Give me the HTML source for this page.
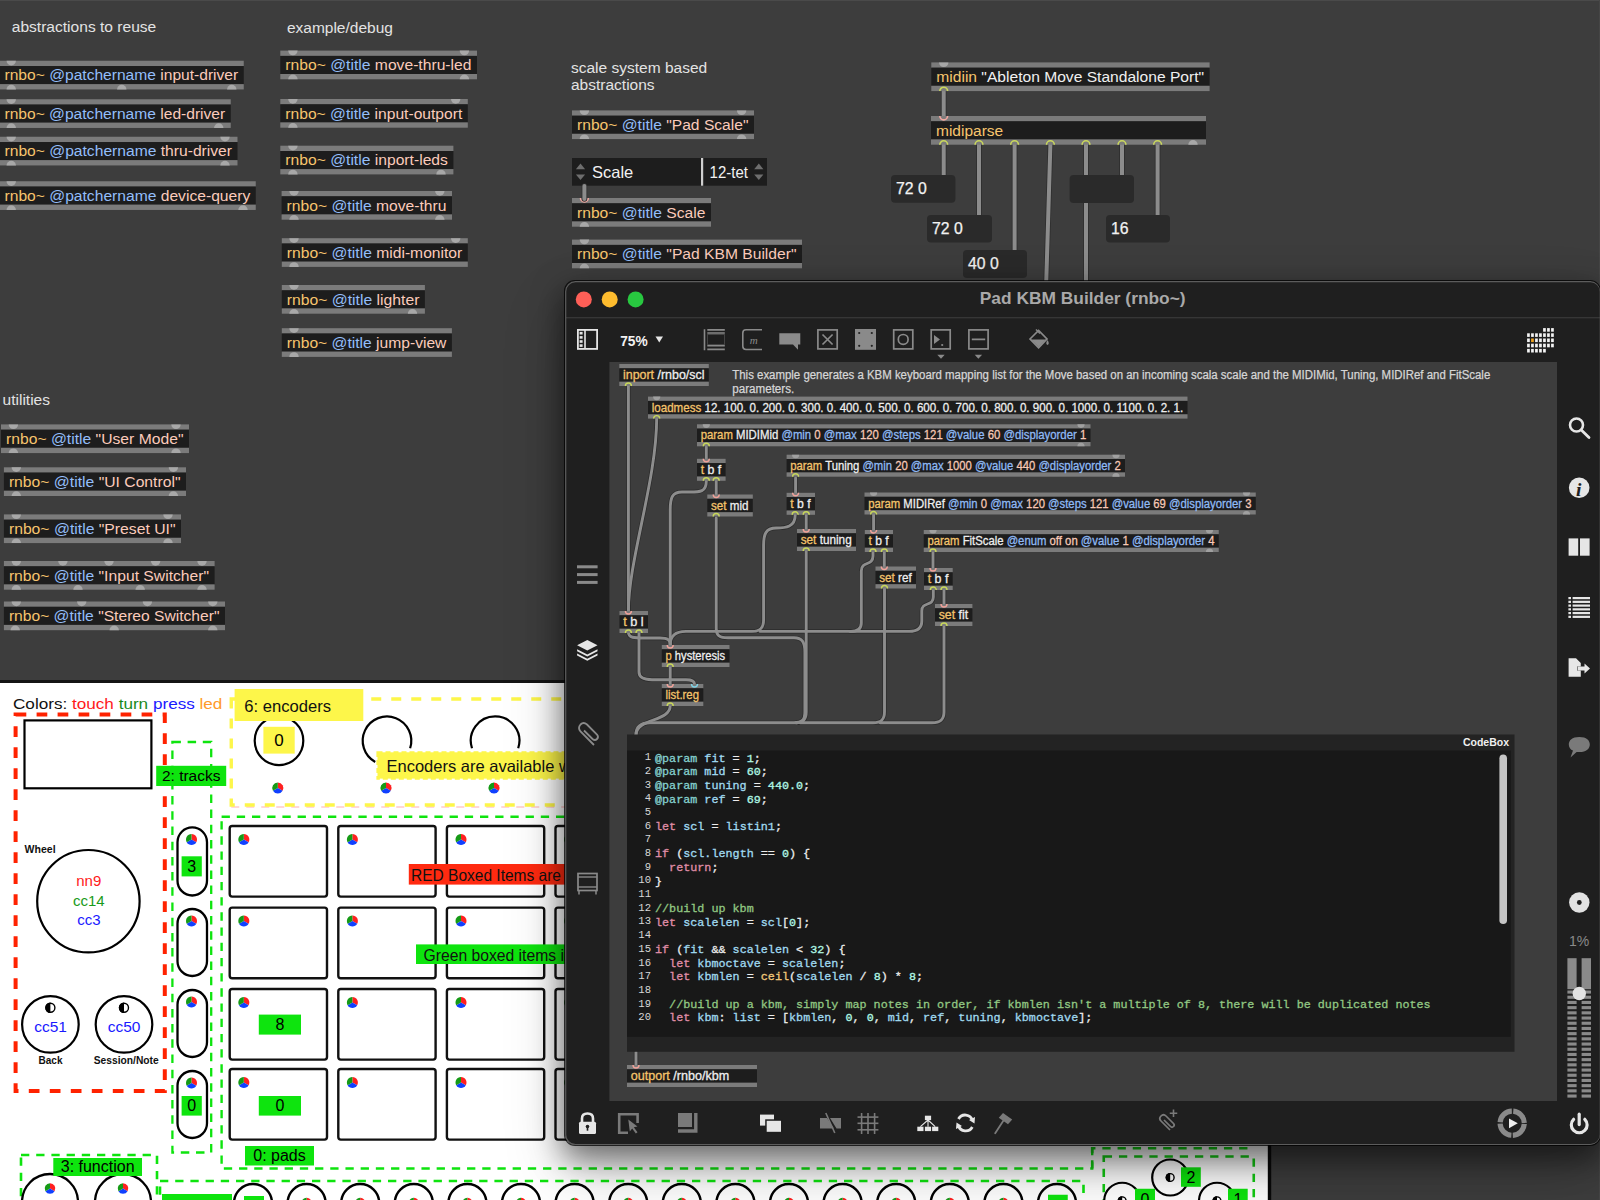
<!DOCTYPE html><html><head><meta charset="utf-8"><title>Max patch</title><style>
html,body{margin:0;padding:0;width:1600px;height:1200px;overflow:hidden;background:#3d3d3d;font-family:"Liberation Sans",sans-serif}
svg{display:block;overflow:hidden}
#win{position:absolute;left:565px;top:281px;width:1035px;height:864px;border-radius:10px;overflow:hidden;box-shadow:0 0 0 1px rgba(0,0,0,0.75),0 12px 30px 2px rgba(0,0,0,0.5),0 26px 64px rgba(0,0,0,0.2)}
</style></head><body>
<div style="position:relative;width:1600px;height:1200px;overflow:hidden">
<svg width="1600" height="1200" style="position:absolute;left:0;top:0">
<rect x="0" y="0" width="1600" height="1200" fill="#3d3d3d"/>
<text x="11.75" y="31.5" font-size="15.5" font-family='"Liberation Sans", sans-serif' textLength="144.5" lengthAdjust="spacingAndGlyphs"><tspan fill="#e3e3e3">abstractions to reuse</tspan></text>
<text x="286.9" y="33" font-size="15.5" font-family='"Liberation Sans", sans-serif'><tspan fill="#e3e3e3">example/debug</tspan></text>
<text x="571" y="72.5" font-size="15.5" font-family='"Liberation Sans", sans-serif'><tspan fill="#e3e3e3">scale system based</tspan></text>
<text x="571" y="90" font-size="15.5" font-family='"Liberation Sans", sans-serif'><tspan fill="#e3e3e3">abstractions</tspan></text>
<text x="2.6" y="405" font-size="15.5" font-family='"Liberation Sans", sans-serif'><tspan fill="#e3e3e3">utilities</tspan></text>
<rect x="-0.5" y="60.75" width="244.25" height="5.3" fill="#7b7b7b"/>
<rect x="-0.5" y="66.05" width="244.25" height="18.1" fill="#1d1d1d"/>
<rect x="-0.5" y="84.15" width="244.25" height="5.3" fill="#7b7b7b"/>
<path d="M6.55,60.75 A4.7,4.7 0 0 0 15.95,60.75 Z" fill="#a8a8a8"/>
<path d="M6.55,89.45 A4.7,4.7 0 0 1 15.95,89.45 Z" fill="#a8a8a8"/>
<path d="M117.05,89.45 A4.7,4.7 0 0 1 126.45,89.45 Z" fill="#a8a8a8"/>
<path d="M227.05,89.45 A4.7,4.7 0 0 1 236.45,89.45 Z" fill="#a8a8a8"/>
<text x="4.5" y="80.35" font-size="15.5" font-family='"Liberation Sans", sans-serif' textLength="233.75" lengthAdjust="spacingAndGlyphs"><tspan fill="#f7c56e">rnbo~ </tspan><tspan fill="#93befa">@patchername </tspan><tspan fill="#fbcbbb">input-driver</tspan></text>
<rect x="-0.5" y="99.25" width="231.25" height="5.3" fill="#7b7b7b"/>
<rect x="-0.5" y="104.55" width="231.25" height="18.1" fill="#1d1d1d"/>
<rect x="-0.5" y="122.65" width="231.25" height="5.3" fill="#7b7b7b"/>
<path d="M6.55,99.25 A4.7,4.7 0 0 0 15.95,99.25 Z" fill="#a8a8a8"/>
<path d="M6.55,127.95 A4.7,4.7 0 0 1 15.95,127.95 Z" fill="#a8a8a8"/>
<path d="M214.05,127.95 A4.7,4.7 0 0 1 223.45,127.95 Z" fill="#a8a8a8"/>
<text x="4.5" y="118.85" font-size="15.5" font-family='"Liberation Sans", sans-serif' textLength="220.75" lengthAdjust="spacingAndGlyphs"><tspan fill="#f7c56e">rnbo~ </tspan><tspan fill="#93befa">@patchername </tspan><tspan fill="#fbcbbb">led-driver</tspan></text>
<rect x="-0.5" y="136.75" width="238" height="5.3" fill="#7b7b7b"/>
<rect x="-0.5" y="142.05" width="238" height="18.1" fill="#1d1d1d"/>
<rect x="-0.5" y="160.15" width="238" height="5.3" fill="#7b7b7b"/>
<path d="M6.55,136.75 A4.7,4.7 0 0 0 15.95,136.75 Z" fill="#a8a8a8"/>
<path d="M220.3,136.75 A4.7,4.7 0 0 0 229.7,136.75 Z" fill="#a8a8a8"/>
<path d="M6.55,165.45 A4.7,4.7 0 0 1 15.95,165.45 Z" fill="#a8a8a8"/>
<path d="M220.3,165.45 A4.7,4.7 0 0 1 229.7,165.45 Z" fill="#a8a8a8"/>
<text x="4.5" y="156.35" font-size="15.5" font-family='"Liberation Sans", sans-serif' textLength="227.5" lengthAdjust="spacingAndGlyphs"><tspan fill="#f7c56e">rnbo~ </tspan><tspan fill="#93befa">@patchername </tspan><tspan fill="#fbcbbb">thru-driver</tspan></text>
<rect x="-0.5" y="181.25" width="256.25" height="5.3" fill="#7b7b7b"/>
<rect x="-0.5" y="186.55" width="256.25" height="18.1" fill="#1d1d1d"/>
<rect x="-0.5" y="204.65" width="256.25" height="5.3" fill="#7b7b7b"/>
<path d="M6.55,181.25 A4.7,4.7 0 0 0 15.95,181.25 Z" fill="#a8a8a8"/>
<path d="M6.55,209.95 A4.7,4.7 0 0 1 15.95,209.95 Z" fill="#a8a8a8"/>
<path d="M238.3,209.95 A4.7,4.7 0 0 1 247.7,209.95 Z" fill="#a8a8a8"/>
<text x="4.5" y="200.85" font-size="15.5" font-family='"Liberation Sans", sans-serif' textLength="245.75" lengthAdjust="spacingAndGlyphs"><tspan fill="#f7c56e">rnbo~ </tspan><tspan fill="#93befa">@patchername </tspan><tspan fill="#fbcbbb">device-query</tspan></text>
<rect x="1" y="424.4" width="188" height="5.3" fill="#7b7b7b"/>
<rect x="1" y="429.7" width="188" height="18.1" fill="#1d1d1d"/>
<rect x="1" y="447.8" width="188" height="5.3" fill="#7b7b7b"/>
<path d="M8.7,424.4 A4.7,4.7 0 0 0 18.1,424.4 Z" fill="#a8a8a8"/>
<path d="M171.3,424.4 A4.7,4.7 0 0 0 180.7,424.4 Z" fill="#a8a8a8"/>
<path d="M8.7,453.1 A4.7,4.7 0 0 1 18.1,453.1 Z" fill="#a8a8a8"/>
<path d="M171.3,453.1 A4.7,4.7 0 0 1 180.7,453.1 Z" fill="#a8a8a8"/>
<text x="6" y="444" font-size="15.5" font-family='"Liberation Sans", sans-serif' textLength="177.5" lengthAdjust="spacingAndGlyphs"><tspan fill="#f7c56e">rnbo~ </tspan><tspan fill="#93befa">@title </tspan><tspan fill="#fbcbbb">&quot;User Mode&quot;</tspan></text>
<rect x="3.9" y="467.3" width="182.1" height="5.3" fill="#7b7b7b"/>
<rect x="3.9" y="472.6" width="182.1" height="18.1" fill="#1d1d1d"/>
<rect x="3.9" y="490.7" width="182.1" height="5.3" fill="#7b7b7b"/>
<path d="M11.6,467.3 A4.7,4.7 0 0 0 21,467.3 Z" fill="#a8a8a8"/>
<path d="M168.7,467.3 A4.7,4.7 0 0 0 178.1,467.3 Z" fill="#a8a8a8"/>
<path d="M11.6,496 A4.7,4.7 0 0 1 21,496 Z" fill="#a8a8a8"/>
<path d="M168.7,496 A4.7,4.7 0 0 1 178.1,496 Z" fill="#a8a8a8"/>
<text x="8.9" y="486.9" font-size="15.5" font-family='"Liberation Sans", sans-serif' textLength="171.6" lengthAdjust="spacingAndGlyphs"><tspan fill="#f7c56e">rnbo~ </tspan><tspan fill="#93befa">@title </tspan><tspan fill="#fbcbbb">&quot;UI Control&quot;</tspan></text>
<rect x="3.9" y="514.4" width="177.1" height="5.3" fill="#7b7b7b"/>
<rect x="3.9" y="519.7" width="177.1" height="18.1" fill="#1d1d1d"/>
<rect x="3.9" y="537.8" width="177.1" height="5.3" fill="#7b7b7b"/>
<path d="M11.6,514.4 A4.7,4.7 0 0 0 21,514.4 Z" fill="#a8a8a8"/>
<path d="M163.3,514.4 A4.7,4.7 0 0 0 172.7,514.4 Z" fill="#a8a8a8"/>
<path d="M11.6,543.1 A4.7,4.7 0 0 1 21,543.1 Z" fill="#a8a8a8"/>
<path d="M163.3,543.1 A4.7,4.7 0 0 1 172.7,543.1 Z" fill="#a8a8a8"/>
<text x="8.9" y="534" font-size="15.5" font-family='"Liberation Sans", sans-serif' textLength="166.6" lengthAdjust="spacingAndGlyphs"><tspan fill="#f7c56e">rnbo~ </tspan><tspan fill="#93befa">@title </tspan><tspan fill="#fbcbbb">&quot;Preset UI&quot;</tspan></text>
<rect x="3.9" y="561" width="210.7" height="5.3" fill="#7b7b7b"/>
<rect x="3.9" y="566.3" width="210.7" height="18.1" fill="#1d1d1d"/>
<rect x="3.9" y="584.4" width="210.7" height="5.3" fill="#7b7b7b"/>
<path d="M11.6,561 A4.7,4.7 0 0 0 21,561 Z" fill="#a8a8a8"/>
<path d="M58.2,561 A4.7,4.7 0 0 0 67.6,561 Z" fill="#a8a8a8"/>
<path d="M104.3,561 A4.7,4.7 0 0 0 113.7,561 Z" fill="#a8a8a8"/>
<path d="M150.9,561 A4.7,4.7 0 0 0 160.3,561 Z" fill="#a8a8a8"/>
<path d="M197.3,561 A4.7,4.7 0 0 0 206.7,561 Z" fill="#a8a8a8"/>
<path d="M11.6,589.7 A4.7,4.7 0 0 1 21,589.7 Z" fill="#a8a8a8"/>
<path d="M73.3,589.7 A4.7,4.7 0 0 1 82.7,589.7 Z" fill="#a8a8a8"/>
<path d="M135.5,589.7 A4.7,4.7 0 0 1 144.9,589.7 Z" fill="#a8a8a8"/>
<path d="M197.3,589.7 A4.7,4.7 0 0 1 206.7,589.7 Z" fill="#a8a8a8"/>
<text x="8.9" y="580.6" font-size="15.5" font-family='"Liberation Sans", sans-serif' textLength="200.2" lengthAdjust="spacingAndGlyphs"><tspan fill="#f7c56e">rnbo~ </tspan><tspan fill="#93befa">@title </tspan><tspan fill="#fbcbbb">&quot;Input Switcher&quot;</tspan></text>
<rect x="3.9" y="601.5" width="221.1" height="5.3" fill="#7b7b7b"/>
<rect x="3.9" y="606.8" width="221.1" height="18.1" fill="#1d1d1d"/>
<rect x="3.9" y="624.9" width="221.1" height="5.3" fill="#7b7b7b"/>
<path d="M11.6,601.5 A4.7,4.7 0 0 0 21,601.5 Z" fill="#a8a8a8"/>
<path d="M77,601.5 A4.7,4.7 0 0 0 86.4,601.5 Z" fill="#a8a8a8"/>
<path d="M142.7,601.5 A4.7,4.7 0 0 0 152.1,601.5 Z" fill="#a8a8a8"/>
<path d="M208.1,601.5 A4.7,4.7 0 0 0 217.5,601.5 Z" fill="#a8a8a8"/>
<path d="M10.5,630.2 A4.7,4.7 0 0 1 19.9,630.2 Z" fill="#a8a8a8"/>
<path d="M109.5,630.2 A4.7,4.7 0 0 1 118.9,630.2 Z" fill="#a8a8a8"/>
<path d="M208.1,630.2 A4.7,4.7 0 0 1 217.5,630.2 Z" fill="#a8a8a8"/>
<text x="8.9" y="621.1" font-size="15.5" font-family='"Liberation Sans", sans-serif' textLength="210.6" lengthAdjust="spacingAndGlyphs"><tspan fill="#f7c56e">rnbo~ </tspan><tspan fill="#93befa">@title </tspan><tspan fill="#fbcbbb">&quot;Stereo Switcher&quot;</tspan></text>
<rect x="280.3" y="50.6" width="196.7" height="5.3" fill="#7b7b7b"/>
<rect x="280.3" y="55.9" width="196.7" height="18.1" fill="#1d1d1d"/>
<rect x="280.3" y="74" width="196.7" height="5.3" fill="#7b7b7b"/>
<path d="M288.2,50.6 A4.7,4.7 0 0 0 297.6,50.6 Z" fill="#a8a8a8"/>
<path d="M459.7,50.6 A4.7,4.7 0 0 0 469.1,50.6 Z" fill="#a8a8a8"/>
<path d="M288.2,79.3 A4.7,4.7 0 0 1 297.6,79.3 Z" fill="#a8a8a8"/>
<path d="M459.7,79.3 A4.7,4.7 0 0 1 469.1,79.3 Z" fill="#a8a8a8"/>
<text x="285.3" y="70.2" font-size="15.5" font-family='"Liberation Sans", sans-serif' textLength="186.2" lengthAdjust="spacingAndGlyphs"><tspan fill="#f7c56e">rnbo~ </tspan><tspan fill="#93befa">@title </tspan><tspan fill="#fbcbbb">move-thru-led</tspan></text>
<rect x="280.3" y="99" width="187.5" height="5.3" fill="#7b7b7b"/>
<rect x="280.3" y="104.3" width="187.5" height="18.1" fill="#1d1d1d"/>
<rect x="280.3" y="122.4" width="187.5" height="5.3" fill="#7b7b7b"/>
<path d="M288.2,99 A4.7,4.7 0 0 0 297.6,99 Z" fill="#a8a8a8"/>
<path d="M451,99 A4.7,4.7 0 0 0 460.4,99 Z" fill="#a8a8a8"/>
<path d="M288.2,127.7 A4.7,4.7 0 0 1 297.6,127.7 Z" fill="#a8a8a8"/>
<text x="285.3" y="118.6" font-size="15.5" font-family='"Liberation Sans", sans-serif' textLength="177" lengthAdjust="spacingAndGlyphs"><tspan fill="#f7c56e">rnbo~ </tspan><tspan fill="#93befa">@title </tspan><tspan fill="#fbcbbb">input-outport</tspan></text>
<rect x="280.3" y="145.7" width="173.1" height="5.3" fill="#7b7b7b"/>
<rect x="280.3" y="151" width="173.1" height="18.1" fill="#1d1d1d"/>
<rect x="280.3" y="169.1" width="173.1" height="5.3" fill="#7b7b7b"/>
<path d="M288.2,145.7 A4.7,4.7 0 0 0 297.6,145.7 Z" fill="#a8a8a8"/>
<path d="M288.2,174.4 A4.7,4.7 0 0 1 297.6,174.4 Z" fill="#a8a8a8"/>
<path d="M436.3,174.4 A4.7,4.7 0 0 1 445.7,174.4 Z" fill="#a8a8a8"/>
<text x="285.3" y="165.3" font-size="15.5" font-family='"Liberation Sans", sans-serif' textLength="162.6" lengthAdjust="spacingAndGlyphs"><tspan fill="#f7c56e">rnbo~ </tspan><tspan fill="#93befa">@title </tspan><tspan fill="#fbcbbb">inport-leds</tspan></text>
<rect x="281.6" y="191" width="170.4" height="5.3" fill="#7b7b7b"/>
<rect x="281.6" y="196.3" width="170.4" height="18.1" fill="#1d1d1d"/>
<rect x="281.6" y="214.4" width="170.4" height="5.3" fill="#7b7b7b"/>
<path d="M289.3,191 A4.7,4.7 0 0 0 298.7,191 Z" fill="#a8a8a8"/>
<path d="M435.1,191 A4.7,4.7 0 0 0 444.5,191 Z" fill="#a8a8a8"/>
<path d="M289.3,219.7 A4.7,4.7 0 0 1 298.7,219.7 Z" fill="#a8a8a8"/>
<path d="M435.1,219.7 A4.7,4.7 0 0 1 444.5,219.7 Z" fill="#a8a8a8"/>
<text x="286.6" y="210.6" font-size="15.5" font-family='"Liberation Sans", sans-serif' textLength="159.9" lengthAdjust="spacingAndGlyphs"><tspan fill="#f7c56e">rnbo~ </tspan><tspan fill="#93befa">@title </tspan><tspan fill="#fbcbbb">move-thru</tspan></text>
<rect x="281.8" y="238.2" width="186" height="5.3" fill="#7b7b7b"/>
<rect x="281.8" y="243.5" width="186" height="18.1" fill="#1d1d1d"/>
<rect x="281.8" y="261.6" width="186" height="5.3" fill="#7b7b7b"/>
<path d="M289.3,238.2 A4.7,4.7 0 0 0 298.7,238.2 Z" fill="#a8a8a8"/>
<path d="M451,238.2 A4.7,4.7 0 0 0 460.4,238.2 Z" fill="#a8a8a8"/>
<path d="M289.3,266.9 A4.7,4.7 0 0 1 298.7,266.9 Z" fill="#a8a8a8"/>
<text x="286.8" y="257.8" font-size="15.5" font-family='"Liberation Sans", sans-serif' textLength="175.5" lengthAdjust="spacingAndGlyphs"><tspan fill="#f7c56e">rnbo~ </tspan><tspan fill="#93befa">@title </tspan><tspan fill="#fbcbbb">midi-monitor</tspan></text>
<rect x="281.8" y="285" width="143.1" height="5.3" fill="#7b7b7b"/>
<rect x="281.8" y="290.3" width="143.1" height="18.1" fill="#1d1d1d"/>
<rect x="281.8" y="308.4" width="143.1" height="5.3" fill="#7b7b7b"/>
<path d="M289.3,285 A4.7,4.7 0 0 0 298.7,285 Z" fill="#a8a8a8"/>
<path d="M289.3,313.7 A4.7,4.7 0 0 1 298.7,313.7 Z" fill="#a8a8a8"/>
<path d="M407.8,313.7 A4.7,4.7 0 0 1 417.2,313.7 Z" fill="#a8a8a8"/>
<text x="286.8" y="304.6" font-size="15.5" font-family='"Liberation Sans", sans-serif' textLength="132.6" lengthAdjust="spacingAndGlyphs"><tspan fill="#f7c56e">rnbo~ </tspan><tspan fill="#93befa">@title </tspan><tspan fill="#fbcbbb">lighter</tspan></text>
<rect x="281.8" y="328.2" width="170.1" height="5.3" fill="#7b7b7b"/>
<rect x="281.8" y="333.5" width="170.1" height="18.1" fill="#1d1d1d"/>
<rect x="281.8" y="351.6" width="170.1" height="5.3" fill="#7b7b7b"/>
<path d="M289.3,328.2 A4.7,4.7 0 0 0 298.7,328.2 Z" fill="#a8a8a8"/>
<path d="M289.3,356.9 A4.7,4.7 0 0 1 298.7,356.9 Z" fill="#a8a8a8"/>
<text x="286.8" y="347.8" font-size="15.5" font-family='"Liberation Sans", sans-serif' textLength="159.6" lengthAdjust="spacingAndGlyphs"><tspan fill="#f7c56e">rnbo~ </tspan><tspan fill="#93befa">@title </tspan><tspan fill="#fbcbbb">jump-view</tspan></text>
<rect x="572" y="110.4" width="182" height="5.3" fill="#7b7b7b"/>
<rect x="572" y="115.7" width="182" height="18.1" fill="#1d1d1d"/>
<rect x="572" y="133.8" width="182" height="5.3" fill="#7b7b7b"/>
<path d="M579.7,110.4 A4.7,4.7 0 0 0 589.1,110.4 Z" fill="#a8a8a8"/>
<path d="M736.9,110.4 A4.7,4.7 0 0 0 746.3,110.4 Z" fill="#a8a8a8"/>
<path d="M579.7,139.1 A4.7,4.7 0 0 1 589.1,139.1 Z" fill="#a8a8a8"/>
<path d="M736.9,139.1 A4.7,4.7 0 0 1 746.3,139.1 Z" fill="#a8a8a8"/>
<text x="577" y="130" font-size="15.5" font-family='"Liberation Sans", sans-serif' textLength="171.5" lengthAdjust="spacingAndGlyphs"><tspan fill="#f7c56e">rnbo~ </tspan><tspan fill="#93befa">@title </tspan><tspan fill="#fbcbbb">&quot;Pad Scale&quot;</tspan></text>
<rect x="572" y="198" width="139" height="5.3" fill="#7b7b7b"/>
<rect x="572" y="203.3" width="139" height="18.1" fill="#1d1d1d"/>
<rect x="572" y="221.4" width="139" height="5.3" fill="#7b7b7b"/>
<path d="M580.5,198 A3.9,3.9 0 0 0 588.3,198" fill="none" stroke="#f2a7a0" stroke-width="1.6"/>
<path d="M579.7,226.7 A4.7,4.7 0 0 1 589.1,226.7 Z" fill="#a8a8a8"/>
<text x="577" y="217.6" font-size="15.5" font-family='"Liberation Sans", sans-serif' textLength="128.5" lengthAdjust="spacingAndGlyphs"><tspan fill="#f7c56e">rnbo~ </tspan><tspan fill="#93befa">@title </tspan><tspan fill="#fbcbbb">Scale</tspan></text>
<rect x="572" y="239.6" width="230" height="5.3" fill="#7b7b7b"/>
<rect x="572" y="244.9" width="230" height="18.1" fill="#1d1d1d"/>
<rect x="572" y="263" width="230" height="5.3" fill="#7b7b7b"/>
<path d="M579.7,239.6 A4.7,4.7 0 0 0 589.1,239.6 Z" fill="#a8a8a8"/>
<path d="M579.7,268.3 A4.7,4.7 0 0 1 589.1,268.3 Z" fill="#a8a8a8"/>
<text x="577" y="259.2" font-size="15.5" font-family='"Liberation Sans", sans-serif' textLength="219.5" lengthAdjust="spacingAndGlyphs"><tspan fill="#f7c56e">rnbo~ </tspan><tspan fill="#93befa">@title </tspan><tspan fill="#fbcbbb">&quot;Pad KBM Builder&quot;</tspan></text>
<rect x="572" y="158" width="195" height="27.7" fill="#1d1d1d"/>
<rect x="701" y="158" width="2.2" height="27.7" fill="#cfcfcf"/>
<path d="M575.9,169.2 l4.6,-5.6 l4.6,5.6 Z" fill="#6e6e6e"/>
<path d="M575.9,174.4 l4.6,5.6 l4.6,-5.6 Z" fill="#6e6e6e"/>
<path d="M754.2,169.2 l4.6,-5.6 l4.6,5.6 Z" fill="#6e6e6e"/>
<path d="M754.2,174.4 l4.6,5.6 l4.6,-5.6 Z" fill="#6e6e6e"/>
<text x="592" y="177.5" font-size="16.5" font-family='"Liberation Sans", sans-serif'><tspan fill="#f2f2f2">Scale</tspan></text>
<text x="709.6" y="177.5" font-size="16.5" font-family='"Liberation Sans", sans-serif' textLength="38.4" lengthAdjust="spacingAndGlyphs"><tspan fill="#f2f2f2">12-tet</tspan></text>
<path d="M584.4,186 L584.4,199" fill="none" stroke="#2e2e2e" stroke-width="5.6" stroke-linecap="round"/><path d="M584.4,186 L584.4,199" fill="none" stroke="#8c8c8c" stroke-width="4" stroke-linecap="round"/>
<path d="M943.7,91 L943.7,117" fill="none" stroke="#2e2e2e" stroke-width="5.6" stroke-linecap="round"/><path d="M943.7,91 L943.7,117" fill="none" stroke="#8c8c8c" stroke-width="4" stroke-linecap="round"/>
<path d="M943.7,144 L943.7,176" fill="none" stroke="#2e2e2e" stroke-width="5.6" stroke-linecap="round"/><path d="M943.7,144 L943.7,176" fill="none" stroke="#8c8c8c" stroke-width="4" stroke-linecap="round"/>
<path d="M979,144 L979,216" fill="none" stroke="#2e2e2e" stroke-width="5.6" stroke-linecap="round"/><path d="M979,144 L979,216" fill="none" stroke="#8c8c8c" stroke-width="4" stroke-linecap="round"/>
<path d="M1014.6,144 L1014.6,251" fill="none" stroke="#2e2e2e" stroke-width="5.6" stroke-linecap="round"/><path d="M1014.6,144 L1014.6,251" fill="none" stroke="#8c8c8c" stroke-width="4" stroke-linecap="round"/>
<path d="M1050.4,144 L1046,290" fill="none" stroke="#2e2e2e" stroke-width="5.6" stroke-linecap="round"/><path d="M1050.4,144 L1046,290" fill="none" stroke="#8c8c8c" stroke-width="4" stroke-linecap="round"/>
<path d="M1086,144 L1086,290" fill="none" stroke="#2e2e2e" stroke-width="5.6" stroke-linecap="round"/><path d="M1086,144 L1086,290" fill="none" stroke="#8c8c8c" stroke-width="4" stroke-linecap="round"/>
<path d="M1122,144 L1122,176" fill="none" stroke="#2e2e2e" stroke-width="5.6" stroke-linecap="round"/><path d="M1122,144 L1122,176" fill="none" stroke="#8c8c8c" stroke-width="4" stroke-linecap="round"/>
<path d="M1157.6,144 L1157.6,216" fill="none" stroke="#2e2e2e" stroke-width="5.6" stroke-linecap="round"/><path d="M1157.6,144 L1157.6,216" fill="none" stroke="#8c8c8c" stroke-width="4" stroke-linecap="round"/>
<rect x="931.3" y="62.4" width="278.3" height="5.3" fill="#7b7b7b"/>
<rect x="931.3" y="67.7" width="278.3" height="18.1" fill="#1d1d1d"/>
<rect x="931.3" y="85.8" width="278.3" height="5.3" fill="#7b7b7b"/>
<path d="M939,62.4 A4.7,4.7 0 0 0 948.4,62.4 Z" fill="#a8a8a8"/>
<path d="M939.8,91.1 A3.9,3.9 0 0 1 947.6,91.1" fill="none" stroke="#cbd95c" stroke-width="1.6"/>
<text x="936.3" y="82" font-size="15.5" font-family='"Liberation Sans", sans-serif' textLength="267.8" lengthAdjust="spacingAndGlyphs"><tspan fill="#f7c56e">midiin </tspan><tspan fill="#f0f0f0">&quot;Ableton Move Standalone Port&quot;</tspan></text>
<rect x="931" y="116" width="275" height="5.3" fill="#7b7b7b"/>
<rect x="931" y="121.3" width="275" height="18.1" fill="#1d1d1d"/>
<rect x="931" y="139.4" width="275" height="5.3" fill="#7b7b7b"/>
<path d="M939.8,116 A3.9,3.9 0 0 0 947.6,116" fill="none" stroke="#f2a7a0" stroke-width="1.6"/>
<path d="M939.8,144.7 A3.9,3.9 0 0 1 947.6,144.7" fill="none" stroke="#cbd95c" stroke-width="1.6"/>
<path d="M975.1,144.7 A3.9,3.9 0 0 1 982.9,144.7" fill="none" stroke="#cbd95c" stroke-width="1.6"/>
<path d="M1010.7,144.7 A3.9,3.9 0 0 1 1018.5,144.7" fill="none" stroke="#cbd95c" stroke-width="1.6"/>
<path d="M1046.5,144.7 A3.9,3.9 0 0 1 1054.3,144.7" fill="none" stroke="#cbd95c" stroke-width="1.6"/>
<path d="M1082.1,144.7 A3.9,3.9 0 0 1 1089.9,144.7" fill="none" stroke="#cbd95c" stroke-width="1.6"/>
<path d="M1118.1,144.7 A3.9,3.9 0 0 1 1125.9,144.7" fill="none" stroke="#cbd95c" stroke-width="1.6"/>
<path d="M1153.7,144.7 A3.9,3.9 0 0 1 1161.5,144.7" fill="none" stroke="#cbd95c" stroke-width="1.6"/>
<path d="M1188.3,144.7 A4.7,4.7 0 0 1 1197.7,144.7 Z" fill="#a8a8a8"/>
<text x="936" y="135.6" font-size="15.5" font-family='"Liberation Sans", sans-serif' data-x="264.5" lengthAdjust="spacingAndGlyphs"><tspan fill="#f7c56e">midiparse</tspan></text>
<rect x="891" y="175" width="64.4" height="27.7" fill="#2a2a2a" rx="4"/>
<text x="896" y="193.9" font-size="15.8" font-family='"Liberation Sans", sans-serif'><tspan fill="#f2f2f2" stroke="#f2f2f2" stroke-width="0.25">72 0</tspan></text>
<rect x="927" y="215" width="65" height="27.5" fill="#2a2a2a" rx="4"/>
<text x="932" y="233.9" font-size="15.8" font-family='"Liberation Sans", sans-serif'><tspan fill="#f2f2f2" stroke="#f2f2f2" stroke-width="0.25">72 0</tspan></text>
<rect x="963" y="250" width="64" height="28" fill="#2a2a2a" rx="4"/>
<text x="968" y="268.9" font-size="15.8" font-family='"Liberation Sans", sans-serif'><tspan fill="#f2f2f2" stroke="#f2f2f2" stroke-width="0.25">40 0</tspan></text>
<rect x="1069.6" y="175" width="64.4" height="28" fill="#2a2a2a" rx="4"/>
<rect x="1106" y="215" width="64" height="27.5" fill="#2a2a2a" rx="4"/>
<text x="1111" y="233.9" font-size="15.8" font-family='"Liberation Sans", sans-serif'><tspan fill="#f2f2f2" stroke="#f2f2f2" stroke-width="0.25">16</tspan></text>
<rect x="0" y="0" width="1600" height="1" fill="#4a4a4a"/>
<rect x="1599" y="0" width="1" height="1200" fill="#454545"/>
</svg>
<svg width="1272" height="520" viewBox="0 680 1272 520" style="position:absolute;left:0;top:680px">
<rect x="0" y="680" width="1268" height="3" fill="#141414"/>
<rect x="0" y="683" width="1268" height="517" fill="#ffffff"/>
<rect x="1267.8" y="680" width="3.4" height="520" fill="#0a0a0a"/>
<text x="13" y="709.3" font-size="15.5" font-family='"Liberation Sans", sans-serif' textLength="209.4" lengthAdjust="spacingAndGlyphs"><tspan fill="#111">Colors: </tspan><tspan fill="#ff1a1a">touch </tspan><tspan fill="#1a8a1a">turn </tspan><tspan fill="#1a1aff">press </tspan><tspan fill="#ff9a2a">led</tspan></text>
<rect x="15.6" y="714.5" width="149.2" height="376.5" fill="none" stroke="#ff2200" stroke-width="4" stroke-dasharray="10.7 10.3"/>
<rect x="24.5" y="720.4" width="126.9" height="67.9" fill="none" stroke="#000" stroke-width="2.2"/>
<text x="24.6" y="853.2" font-size="10" font-family='"Liberation Sans", sans-serif' textLength="31" lengthAdjust="spacingAndGlyphs" font-weight="bold"><tspan fill="#111">Wheel</tspan></text>
<circle cx="88.4" cy="901.2" r="51.2" fill="none" stroke="#000" stroke-width="2.2"/>
<text x="88.8" y="886.3" font-size="15" font-family='"Liberation Sans", sans-serif' text-anchor="middle" fill="#ff1a1a">nn9</text>
<text x="88.8" y="906" font-size="15" font-family='"Liberation Sans", sans-serif' text-anchor="middle" fill="#1a9a1a">cc14</text>
<text x="88.8" y="925.2" font-size="15" font-family='"Liberation Sans", sans-serif' text-anchor="middle" fill="#1a1aff">cc3</text>
<circle cx="50.4" cy="1024.4" r="28.3" fill="none" stroke="#000" stroke-width="2.2"/>
<circle cx="50.4" cy="1007.8" r="4.5" fill="#fff" stroke="#000" stroke-width="1.4"/><path d="M50.4,1002.6 A5.2,5.2 0 0 0 50.4,1013 Z" fill="#000"/>
<text x="50.5" y="1031.8" font-size="15.5" font-family='"Liberation Sans", sans-serif' text-anchor="middle" fill="#1a1aff">cc51</text>
<circle cx="124" cy="1024.4" r="28.3" fill="none" stroke="#000" stroke-width="2.2"/>
<circle cx="124" cy="1007.8" r="4.5" fill="#fff" stroke="#000" stroke-width="1.4"/><path d="M124,1002.6 A5.2,5.2 0 0 0 124,1013 Z" fill="#000"/>
<text x="124.1" y="1031.8" font-size="15.5" font-family='"Liberation Sans", sans-serif' text-anchor="middle" fill="#1a1aff">cc50</text>
<text x="50.5" y="1064" font-size="10" font-weight="bold" font-family='"Liberation Sans", sans-serif' text-anchor="middle" fill="#111">Back</text>
<text x="93.7" y="1064" font-size="10" font-family='"Liberation Sans", sans-serif' textLength="65" lengthAdjust="spacingAndGlyphs" font-weight="bold"><tspan fill="#111">Session/Note</tspan></text>
<rect x="172.4" y="742" width="38.8" height="410.5" fill="none" stroke="#0ee40e" stroke-width="2.3" stroke-dasharray="8.5 6.7"/>
<rect x="177.5" y="827.4" width="29.5" height="68.1" rx="14.75" fill="#fff" stroke="#000" stroke-width="2.3"/>
<path d="M191.5,839.5 L191.5,834 A5.5,5.5 0 0 1 196.26,842.25 Z" fill="#ff2020"/><path d="M191.5,839.5 L196.26,842.25 A5.5,5.5 0 0 1 186.74,842.25 Z" fill="#1040ff"/><path d="M191.5,839.5 L186.74,842.25 A5.5,5.5 0 0 1 191.5,834 Z" fill="#169a16"/>
<rect x="177.5" y="909" width="29.5" height="67" rx="14.75" fill="#fff" stroke="#000" stroke-width="2.3"/>
<path d="M191.5,921.1 L191.5,915.6 A5.5,5.5 0 0 1 196.26,923.85 Z" fill="#ff2020"/><path d="M191.5,921.1 L196.26,923.85 A5.5,5.5 0 0 1 186.74,923.85 Z" fill="#1040ff"/><path d="M191.5,921.1 L186.74,923.85 A5.5,5.5 0 0 1 191.5,915.6 Z" fill="#169a16"/>
<rect x="177.5" y="990" width="29.5" height="67" rx="14.75" fill="#fff" stroke="#000" stroke-width="2.3"/>
<path d="M191.5,1002.1 L191.5,996.6 A5.5,5.5 0 0 1 196.26,1004.85 Z" fill="#ff2020"/><path d="M191.5,1002.1 L196.26,1004.85 A5.5,5.5 0 0 1 186.74,1004.85 Z" fill="#1040ff"/><path d="M191.5,1002.1 L186.74,1004.85 A5.5,5.5 0 0 1 191.5,996.6 Z" fill="#169a16"/>
<rect x="177.5" y="1071" width="29.5" height="67" rx="14.75" fill="#fff" stroke="#000" stroke-width="2.3"/>
<path d="M191.5,1083.1 L191.5,1077.6 A5.5,5.5 0 0 1 196.26,1085.85 Z" fill="#ff2020"/><path d="M191.5,1083.1 L196.26,1085.85 A5.5,5.5 0 0 1 186.74,1085.85 Z" fill="#1040ff"/><path d="M191.5,1083.1 L186.74,1085.85 A5.5,5.5 0 0 1 191.5,1077.6 Z" fill="#169a16"/>
<rect x="181.6" y="856.3" width="20.2" height="20.1" fill="#0ee40e"/><text x="191.7" y="871.81" font-size="16" font-family='"Liberation Sans", sans-serif' text-anchor="middle" fill="#000">3</text>
<rect x="181.6" y="1096" width="20.2" height="19.6" fill="#0ee40e"/><text x="191.7" y="1111.26" font-size="16" font-family='"Liberation Sans", sans-serif' text-anchor="middle" fill="#000">0</text>
<rect x="156.2" y="765.8" width="70" height="20.2" fill="#0ee40e"/><text x="191.2" y="781.18" font-size="15.5" font-family='"Liberation Sans", sans-serif' text-anchor="middle" fill="#000">2: tracks</text>
<path d="M231.25,807 H1268" fill="none" stroke="#ffb0b0" stroke-width="1.2" stroke-dasharray="8 7"/>
<rect x="231.25" y="699" width="1068.75" height="106" fill="none" stroke="#fdf64a" stroke-width="3.4" stroke-dasharray="10 10"/>
<circle cx="279" cy="740.75" r="24.3" fill="none" stroke="#000" stroke-width="2.2"/>
<rect x="234.6" y="689" width="128.7" height="32" fill="#fdf64a"/><text x="298.95" y="710.28" font-size="15.5" font-family='"Liberation Sans", sans-serif' text-anchor="middle" fill="#000"></text>
<text x="244.3" y="711.5" font-size="16.5" font-family='"Liberation Sans", sans-serif' textLength="86.7" lengthAdjust="spacingAndGlyphs"><tspan fill="#111">6: encoders</tspan></text>
<path d="M375.22,762 A24.3,24.3 0 1 1 410.11,748.26" fill="none" stroke="#000" stroke-width="2.2"/>
<path d="M471.99,748.26 A24.3,24.3 0 1 1 518.21,748.26" fill="none" stroke="#000" stroke-width="2.2"/>
<rect x="263.4" y="726.8" width="31.3" height="26.8" fill="#fdf64a"/><text x="279.05" y="746.02" font-size="17" font-family='"Liberation Sans", sans-serif' text-anchor="middle" fill="#000">0</text>
<path d="M277.8,788 L277.8,782.4 A5.6,5.6 0 0 1 282.65,790.8 Z" fill="#ff2020"/><path d="M277.8,788 L282.65,790.8 A5.6,5.6 0 0 1 272.95,790.8 Z" fill="#1040ff"/><path d="M277.8,788 L272.95,790.8 A5.6,5.6 0 0 1 277.8,782.4 Z" fill="#169a16"/>
<path d="M386,788 L386,782.4 A5.6,5.6 0 0 1 390.85,790.8 Z" fill="#ff2020"/><path d="M386,788 L390.85,790.8 A5.6,5.6 0 0 1 381.15,790.8 Z" fill="#1040ff"/><path d="M386,788 L381.15,790.8 A5.6,5.6 0 0 1 386,782.4 Z" fill="#169a16"/>
<path d="M494,788 L494,782.4 A5.6,5.6 0 0 1 498.85,790.8 Z" fill="#ff2020"/><path d="M494,788 L498.85,790.8 A5.6,5.6 0 0 1 489.15,790.8 Z" fill="#1040ff"/><path d="M494,788 L489.15,790.8 A5.6,5.6 0 0 1 494,782.4 Z" fill="#169a16"/>
<rect x="377.5" y="752.3" width="900" height="26.3" fill="#fdf64a"/>
<rect x="377.5" y="752.3" width="900" height="26.3" fill="none" stroke="#fdf64a" stroke-width="2.2" stroke-dasharray="5 3"/>
<text x="386.5" y="771.5" font-size="16.5" font-family='"Liberation Sans", sans-serif'><tspan fill="#111">Encoders are available when </tspan></text>
<rect x="221.6" y="816.75" width="870.6" height="351.75" fill="none" stroke="#0ee40e" stroke-width="2.4" stroke-dasharray="8.3 6.9"/>
<rect x="229.7" y="826" width="97.3" height="70.6" rx="2.5" fill="#fff" stroke="#111" stroke-width="2.4"/>
<path d="M243.8,839.5 L243.8,834 A5.5,5.5 0 0 1 248.56,842.25 Z" fill="#ff2020"/><path d="M243.8,839.5 L248.56,842.25 A5.5,5.5 0 0 1 239.04,842.25 Z" fill="#1040ff"/><path d="M243.8,839.5 L239.04,842.25 A5.5,5.5 0 0 1 243.8,834 Z" fill="#169a16"/>
<rect x="338.3" y="826" width="97.3" height="70.6" rx="2.5" fill="#fff" stroke="#111" stroke-width="2.4"/>
<path d="M352.4,839.5 L352.4,834 A5.5,5.5 0 0 1 357.16,842.25 Z" fill="#ff2020"/><path d="M352.4,839.5 L357.16,842.25 A5.5,5.5 0 0 1 347.64,842.25 Z" fill="#1040ff"/><path d="M352.4,839.5 L347.64,842.25 A5.5,5.5 0 0 1 352.4,834 Z" fill="#169a16"/>
<rect x="446.9" y="826" width="97.3" height="70.6" rx="2.5" fill="#fff" stroke="#111" stroke-width="2.4"/>
<path d="M461,839.5 L461,834 A5.5,5.5 0 0 1 465.76,842.25 Z" fill="#ff2020"/><path d="M461,839.5 L465.76,842.25 A5.5,5.5 0 0 1 456.24,842.25 Z" fill="#1040ff"/><path d="M461,839.5 L456.24,842.25 A5.5,5.5 0 0 1 461,834 Z" fill="#169a16"/>
<rect x="555.5" y="826" width="97.3" height="70.6" rx="2.5" fill="#fff" stroke="#111" stroke-width="2.4"/>
<path d="M569.6,839.5 L569.6,834 A5.5,5.5 0 0 1 574.36,842.25 Z" fill="#ff2020"/><path d="M569.6,839.5 L574.36,842.25 A5.5,5.5 0 0 1 564.84,842.25 Z" fill="#1040ff"/><path d="M569.6,839.5 L564.84,842.25 A5.5,5.5 0 0 1 569.6,834 Z" fill="#169a16"/>
<rect x="664.1" y="826" width="97.3" height="70.6" rx="2.5" fill="#fff" stroke="#111" stroke-width="2.4"/>
<path d="M678.2,839.5 L678.2,834 A5.5,5.5 0 0 1 682.96,842.25 Z" fill="#ff2020"/><path d="M678.2,839.5 L682.96,842.25 A5.5,5.5 0 0 1 673.44,842.25 Z" fill="#1040ff"/><path d="M678.2,839.5 L673.44,842.25 A5.5,5.5 0 0 1 678.2,834 Z" fill="#169a16"/>
<rect x="772.7" y="826" width="97.3" height="70.6" rx="2.5" fill="#fff" stroke="#111" stroke-width="2.4"/>
<path d="M786.8,839.5 L786.8,834 A5.5,5.5 0 0 1 791.56,842.25 Z" fill="#ff2020"/><path d="M786.8,839.5 L791.56,842.25 A5.5,5.5 0 0 1 782.04,842.25 Z" fill="#1040ff"/><path d="M786.8,839.5 L782.04,842.25 A5.5,5.5 0 0 1 786.8,834 Z" fill="#169a16"/>
<rect x="881.3" y="826" width="97.3" height="70.6" rx="2.5" fill="#fff" stroke="#111" stroke-width="2.4"/>
<path d="M895.4,839.5 L895.4,834 A5.5,5.5 0 0 1 900.16,842.25 Z" fill="#ff2020"/><path d="M895.4,839.5 L900.16,842.25 A5.5,5.5 0 0 1 890.64,842.25 Z" fill="#1040ff"/><path d="M895.4,839.5 L890.64,842.25 A5.5,5.5 0 0 1 895.4,834 Z" fill="#169a16"/>
<rect x="989.9" y="826" width="97.3" height="70.6" rx="2.5" fill="#fff" stroke="#111" stroke-width="2.4"/>
<path d="M1004,839.5 L1004,834 A5.5,5.5 0 0 1 1008.76,842.25 Z" fill="#ff2020"/><path d="M1004,839.5 L1008.76,842.25 A5.5,5.5 0 0 1 999.24,842.25 Z" fill="#1040ff"/><path d="M1004,839.5 L999.24,842.25 A5.5,5.5 0 0 1 1004,834 Z" fill="#169a16"/>
<rect x="229.7" y="907.6" width="97.3" height="70.6" rx="2.5" fill="#fff" stroke="#111" stroke-width="2.4"/>
<path d="M243.8,921.1 L243.8,915.6 A5.5,5.5 0 0 1 248.56,923.85 Z" fill="#ff2020"/><path d="M243.8,921.1 L248.56,923.85 A5.5,5.5 0 0 1 239.04,923.85 Z" fill="#1040ff"/><path d="M243.8,921.1 L239.04,923.85 A5.5,5.5 0 0 1 243.8,915.6 Z" fill="#169a16"/>
<rect x="338.3" y="907.6" width="97.3" height="70.6" rx="2.5" fill="#fff" stroke="#111" stroke-width="2.4"/>
<path d="M352.4,921.1 L352.4,915.6 A5.5,5.5 0 0 1 357.16,923.85 Z" fill="#ff2020"/><path d="M352.4,921.1 L357.16,923.85 A5.5,5.5 0 0 1 347.64,923.85 Z" fill="#1040ff"/><path d="M352.4,921.1 L347.64,923.85 A5.5,5.5 0 0 1 352.4,915.6 Z" fill="#169a16"/>
<rect x="446.9" y="907.6" width="97.3" height="70.6" rx="2.5" fill="#fff" stroke="#111" stroke-width="2.4"/>
<path d="M461,921.1 L461,915.6 A5.5,5.5 0 0 1 465.76,923.85 Z" fill="#ff2020"/><path d="M461,921.1 L465.76,923.85 A5.5,5.5 0 0 1 456.24,923.85 Z" fill="#1040ff"/><path d="M461,921.1 L456.24,923.85 A5.5,5.5 0 0 1 461,915.6 Z" fill="#169a16"/>
<rect x="555.5" y="907.6" width="97.3" height="70.6" rx="2.5" fill="#fff" stroke="#111" stroke-width="2.4"/>
<path d="M569.6,921.1 L569.6,915.6 A5.5,5.5 0 0 1 574.36,923.85 Z" fill="#ff2020"/><path d="M569.6,921.1 L574.36,923.85 A5.5,5.5 0 0 1 564.84,923.85 Z" fill="#1040ff"/><path d="M569.6,921.1 L564.84,923.85 A5.5,5.5 0 0 1 569.6,915.6 Z" fill="#169a16"/>
<rect x="664.1" y="907.6" width="97.3" height="70.6" rx="2.5" fill="#fff" stroke="#111" stroke-width="2.4"/>
<path d="M678.2,921.1 L678.2,915.6 A5.5,5.5 0 0 1 682.96,923.85 Z" fill="#ff2020"/><path d="M678.2,921.1 L682.96,923.85 A5.5,5.5 0 0 1 673.44,923.85 Z" fill="#1040ff"/><path d="M678.2,921.1 L673.44,923.85 A5.5,5.5 0 0 1 678.2,915.6 Z" fill="#169a16"/>
<rect x="772.7" y="907.6" width="97.3" height="70.6" rx="2.5" fill="#fff" stroke="#111" stroke-width="2.4"/>
<path d="M786.8,921.1 L786.8,915.6 A5.5,5.5 0 0 1 791.56,923.85 Z" fill="#ff2020"/><path d="M786.8,921.1 L791.56,923.85 A5.5,5.5 0 0 1 782.04,923.85 Z" fill="#1040ff"/><path d="M786.8,921.1 L782.04,923.85 A5.5,5.5 0 0 1 786.8,915.6 Z" fill="#169a16"/>
<rect x="881.3" y="907.6" width="97.3" height="70.6" rx="2.5" fill="#fff" stroke="#111" stroke-width="2.4"/>
<path d="M895.4,921.1 L895.4,915.6 A5.5,5.5 0 0 1 900.16,923.85 Z" fill="#ff2020"/><path d="M895.4,921.1 L900.16,923.85 A5.5,5.5 0 0 1 890.64,923.85 Z" fill="#1040ff"/><path d="M895.4,921.1 L890.64,923.85 A5.5,5.5 0 0 1 895.4,915.6 Z" fill="#169a16"/>
<rect x="989.9" y="907.6" width="97.3" height="70.6" rx="2.5" fill="#fff" stroke="#111" stroke-width="2.4"/>
<path d="M1004,921.1 L1004,915.6 A5.5,5.5 0 0 1 1008.76,923.85 Z" fill="#ff2020"/><path d="M1004,921.1 L1008.76,923.85 A5.5,5.5 0 0 1 999.24,923.85 Z" fill="#1040ff"/><path d="M1004,921.1 L999.24,923.85 A5.5,5.5 0 0 1 1004,915.6 Z" fill="#169a16"/>
<rect x="229.7" y="989" width="97.3" height="70.6" rx="2.5" fill="#fff" stroke="#111" stroke-width="2.4"/>
<path d="M243.8,1002.5 L243.8,997 A5.5,5.5 0 0 1 248.56,1005.25 Z" fill="#ff2020"/><path d="M243.8,1002.5 L248.56,1005.25 A5.5,5.5 0 0 1 239.04,1005.25 Z" fill="#1040ff"/><path d="M243.8,1002.5 L239.04,1005.25 A5.5,5.5 0 0 1 243.8,997 Z" fill="#169a16"/>
<rect x="338.3" y="989" width="97.3" height="70.6" rx="2.5" fill="#fff" stroke="#111" stroke-width="2.4"/>
<path d="M352.4,1002.5 L352.4,997 A5.5,5.5 0 0 1 357.16,1005.25 Z" fill="#ff2020"/><path d="M352.4,1002.5 L357.16,1005.25 A5.5,5.5 0 0 1 347.64,1005.25 Z" fill="#1040ff"/><path d="M352.4,1002.5 L347.64,1005.25 A5.5,5.5 0 0 1 352.4,997 Z" fill="#169a16"/>
<rect x="446.9" y="989" width="97.3" height="70.6" rx="2.5" fill="#fff" stroke="#111" stroke-width="2.4"/>
<path d="M461,1002.5 L461,997 A5.5,5.5 0 0 1 465.76,1005.25 Z" fill="#ff2020"/><path d="M461,1002.5 L465.76,1005.25 A5.5,5.5 0 0 1 456.24,1005.25 Z" fill="#1040ff"/><path d="M461,1002.5 L456.24,1005.25 A5.5,5.5 0 0 1 461,997 Z" fill="#169a16"/>
<rect x="555.5" y="989" width="97.3" height="70.6" rx="2.5" fill="#fff" stroke="#111" stroke-width="2.4"/>
<path d="M569.6,1002.5 L569.6,997 A5.5,5.5 0 0 1 574.36,1005.25 Z" fill="#ff2020"/><path d="M569.6,1002.5 L574.36,1005.25 A5.5,5.5 0 0 1 564.84,1005.25 Z" fill="#1040ff"/><path d="M569.6,1002.5 L564.84,1005.25 A5.5,5.5 0 0 1 569.6,997 Z" fill="#169a16"/>
<rect x="664.1" y="989" width="97.3" height="70.6" rx="2.5" fill="#fff" stroke="#111" stroke-width="2.4"/>
<path d="M678.2,1002.5 L678.2,997 A5.5,5.5 0 0 1 682.96,1005.25 Z" fill="#ff2020"/><path d="M678.2,1002.5 L682.96,1005.25 A5.5,5.5 0 0 1 673.44,1005.25 Z" fill="#1040ff"/><path d="M678.2,1002.5 L673.44,1005.25 A5.5,5.5 0 0 1 678.2,997 Z" fill="#169a16"/>
<rect x="772.7" y="989" width="97.3" height="70.6" rx="2.5" fill="#fff" stroke="#111" stroke-width="2.4"/>
<path d="M786.8,1002.5 L786.8,997 A5.5,5.5 0 0 1 791.56,1005.25 Z" fill="#ff2020"/><path d="M786.8,1002.5 L791.56,1005.25 A5.5,5.5 0 0 1 782.04,1005.25 Z" fill="#1040ff"/><path d="M786.8,1002.5 L782.04,1005.25 A5.5,5.5 0 0 1 786.8,997 Z" fill="#169a16"/>
<rect x="881.3" y="989" width="97.3" height="70.6" rx="2.5" fill="#fff" stroke="#111" stroke-width="2.4"/>
<path d="M895.4,1002.5 L895.4,997 A5.5,5.5 0 0 1 900.16,1005.25 Z" fill="#ff2020"/><path d="M895.4,1002.5 L900.16,1005.25 A5.5,5.5 0 0 1 890.64,1005.25 Z" fill="#1040ff"/><path d="M895.4,1002.5 L890.64,1005.25 A5.5,5.5 0 0 1 895.4,997 Z" fill="#169a16"/>
<rect x="989.9" y="989" width="97.3" height="70.6" rx="2.5" fill="#fff" stroke="#111" stroke-width="2.4"/>
<path d="M1004,1002.5 L1004,997 A5.5,5.5 0 0 1 1008.76,1005.25 Z" fill="#ff2020"/><path d="M1004,1002.5 L1008.76,1005.25 A5.5,5.5 0 0 1 999.24,1005.25 Z" fill="#1040ff"/><path d="M1004,1002.5 L999.24,1005.25 A5.5,5.5 0 0 1 1004,997 Z" fill="#169a16"/>
<rect x="229.7" y="1069" width="97.3" height="70.6" rx="2.5" fill="#fff" stroke="#111" stroke-width="2.4"/>
<path d="M243.8,1082.5 L243.8,1077 A5.5,5.5 0 0 1 248.56,1085.25 Z" fill="#ff2020"/><path d="M243.8,1082.5 L248.56,1085.25 A5.5,5.5 0 0 1 239.04,1085.25 Z" fill="#1040ff"/><path d="M243.8,1082.5 L239.04,1085.25 A5.5,5.5 0 0 1 243.8,1077 Z" fill="#169a16"/>
<rect x="338.3" y="1069" width="97.3" height="70.6" rx="2.5" fill="#fff" stroke="#111" stroke-width="2.4"/>
<path d="M352.4,1082.5 L352.4,1077 A5.5,5.5 0 0 1 357.16,1085.25 Z" fill="#ff2020"/><path d="M352.4,1082.5 L357.16,1085.25 A5.5,5.5 0 0 1 347.64,1085.25 Z" fill="#1040ff"/><path d="M352.4,1082.5 L347.64,1085.25 A5.5,5.5 0 0 1 352.4,1077 Z" fill="#169a16"/>
<rect x="446.9" y="1069" width="97.3" height="70.6" rx="2.5" fill="#fff" stroke="#111" stroke-width="2.4"/>
<path d="M461,1082.5 L461,1077 A5.5,5.5 0 0 1 465.76,1085.25 Z" fill="#ff2020"/><path d="M461,1082.5 L465.76,1085.25 A5.5,5.5 0 0 1 456.24,1085.25 Z" fill="#1040ff"/><path d="M461,1082.5 L456.24,1085.25 A5.5,5.5 0 0 1 461,1077 Z" fill="#169a16"/>
<rect x="555.5" y="1069" width="97.3" height="70.6" rx="2.5" fill="#fff" stroke="#111" stroke-width="2.4"/>
<path d="M569.6,1082.5 L569.6,1077 A5.5,5.5 0 0 1 574.36,1085.25 Z" fill="#ff2020"/><path d="M569.6,1082.5 L574.36,1085.25 A5.5,5.5 0 0 1 564.84,1085.25 Z" fill="#1040ff"/><path d="M569.6,1082.5 L564.84,1085.25 A5.5,5.5 0 0 1 569.6,1077 Z" fill="#169a16"/>
<rect x="664.1" y="1069" width="97.3" height="70.6" rx="2.5" fill="#fff" stroke="#111" stroke-width="2.4"/>
<path d="M678.2,1082.5 L678.2,1077 A5.5,5.5 0 0 1 682.96,1085.25 Z" fill="#ff2020"/><path d="M678.2,1082.5 L682.96,1085.25 A5.5,5.5 0 0 1 673.44,1085.25 Z" fill="#1040ff"/><path d="M678.2,1082.5 L673.44,1085.25 A5.5,5.5 0 0 1 678.2,1077 Z" fill="#169a16"/>
<rect x="772.7" y="1069" width="97.3" height="70.6" rx="2.5" fill="#fff" stroke="#111" stroke-width="2.4"/>
<path d="M786.8,1082.5 L786.8,1077 A5.5,5.5 0 0 1 791.56,1085.25 Z" fill="#ff2020"/><path d="M786.8,1082.5 L791.56,1085.25 A5.5,5.5 0 0 1 782.04,1085.25 Z" fill="#1040ff"/><path d="M786.8,1082.5 L782.04,1085.25 A5.5,5.5 0 0 1 786.8,1077 Z" fill="#169a16"/>
<rect x="881.3" y="1069" width="97.3" height="70.6" rx="2.5" fill="#fff" stroke="#111" stroke-width="2.4"/>
<path d="M895.4,1082.5 L895.4,1077 A5.5,5.5 0 0 1 900.16,1085.25 Z" fill="#ff2020"/><path d="M895.4,1082.5 L900.16,1085.25 A5.5,5.5 0 0 1 890.64,1085.25 Z" fill="#1040ff"/><path d="M895.4,1082.5 L890.64,1085.25 A5.5,5.5 0 0 1 895.4,1077 Z" fill="#169a16"/>
<rect x="989.9" y="1069" width="97.3" height="70.6" rx="2.5" fill="#fff" stroke="#111" stroke-width="2.4"/>
<path d="M1004,1082.5 L1004,1077 A5.5,5.5 0 0 1 1008.76,1085.25 Z" fill="#ff2020"/><path d="M1004,1082.5 L1008.76,1085.25 A5.5,5.5 0 0 1 999.24,1085.25 Z" fill="#1040ff"/><path d="M1004,1082.5 L999.24,1085.25 A5.5,5.5 0 0 1 1004,1077 Z" fill="#169a16"/>
<rect x="258.8" y="1014.6" width="42.2" height="20" fill="#0ee40e"/><text x="279.9" y="1030.06" font-size="16" font-family='"Liberation Sans", sans-serif' text-anchor="middle" fill="#000">8</text>
<rect x="258.8" y="1096" width="42.2" height="19.6" fill="#0ee40e"/><text x="279.9" y="1111.26" font-size="16" font-family='"Liberation Sans", sans-serif' text-anchor="middle" fill="#000">0</text>
<rect x="245" y="1146" width="69" height="19.5" fill="#0ee40e"/><text x="279.5" y="1161.21" font-size="16" font-family='"Liberation Sans", sans-serif' text-anchor="middle" fill="#000">0: pads</text>
<rect x="408.8" y="864" width="900" height="20.6" fill="#ff2a10"/>
<text x="411" y="880.5" font-size="16.5" font-family='"Liberation Sans", sans-serif' textLength="150" lengthAdjust="spacingAndGlyphs"><tspan fill="#111">RED Boxed Items are</tspan></text>
<rect x="416" y="944.4" width="900" height="19.6" fill="#0ee40e"/>
<text x="423.6" y="960.5" font-size="16.3" font-family='"Liberation Sans", sans-serif' textLength="149" lengthAdjust="spacingAndGlyphs"><tspan fill="#111">Green boxed items in</tspan></text>
<rect x="21" y="1155" width="136" height="105" fill="none" stroke="#0ee40e" stroke-width="2.6" stroke-dasharray="8.3 6.9"/>
<circle cx="50" cy="1202" r="28" fill="#fff" stroke="#000" stroke-width="2.3"/>
<path d="M50,1188.5 L50,1183.2 A5.3,5.3 0 0 1 54.59,1191.15 Z" fill="#ff2020"/><path d="M50,1188.5 L54.59,1191.15 A5.3,5.3 0 0 1 45.41,1191.15 Z" fill="#1040ff"/><path d="M50,1188.5 L45.41,1191.15 A5.3,5.3 0 0 1 50,1183.2 Z" fill="#169a16"/>
<circle cx="123" cy="1202" r="28" fill="#fff" stroke="#000" stroke-width="2.3"/>
<path d="M123,1188.5 L123,1183.2 A5.3,5.3 0 0 1 127.59,1191.15 Z" fill="#ff2020"/><path d="M123,1188.5 L127.59,1191.15 A5.3,5.3 0 0 1 118.41,1191.15 Z" fill="#1040ff"/><path d="M123,1188.5 L118.41,1191.15 A5.3,5.3 0 0 1 123,1183.2 Z" fill="#169a16"/>
<rect x="53.3" y="1158" width="88.7" height="18" fill="#0ee40e"/><text x="97.65" y="1172.46" font-size="16" font-family='"Liberation Sans", sans-serif' text-anchor="middle" fill="#000">3: function</text>
<rect x="160" y="1181" width="923.5" height="79" fill="none" stroke="#0ee40e" stroke-width="2.6" stroke-dasharray="8.3 6.9"/>
<circle cx="253" cy="1203" r="19" fill="#fff" stroke="#000" stroke-width="2.4"/>
<path d="M253,1203 L253,1197.8 A5.2,5.2 0 0 1 257.5,1205.6 Z" fill="#ff2020"/><path d="M253,1203 L257.5,1205.6 A5.2,5.2 0 0 1 248.5,1205.6 Z" fill="#1040ff"/><path d="M253,1203 L248.5,1205.6 A5.2,5.2 0 0 1 253,1197.8 Z" fill="#169a16"/>
<circle cx="306.6" cy="1203" r="19" fill="#fff" stroke="#000" stroke-width="2.4"/>
<path d="M306.6,1203 L306.6,1197.8 A5.2,5.2 0 0 1 311.1,1205.6 Z" fill="#ff2020"/><path d="M306.6,1203 L311.1,1205.6 A5.2,5.2 0 0 1 302.1,1205.6 Z" fill="#1040ff"/><path d="M306.6,1203 L302.1,1205.6 A5.2,5.2 0 0 1 306.6,1197.8 Z" fill="#169a16"/>
<circle cx="360.2" cy="1203" r="19" fill="#fff" stroke="#000" stroke-width="2.4"/>
<path d="M360.2,1203 L360.2,1197.8 A5.2,5.2 0 0 1 364.7,1205.6 Z" fill="#ff2020"/><path d="M360.2,1203 L364.7,1205.6 A5.2,5.2 0 0 1 355.7,1205.6 Z" fill="#1040ff"/><path d="M360.2,1203 L355.7,1205.6 A5.2,5.2 0 0 1 360.2,1197.8 Z" fill="#169a16"/>
<circle cx="413.8" cy="1203" r="19" fill="#fff" stroke="#000" stroke-width="2.4"/>
<path d="M413.8,1203 L413.8,1197.8 A5.2,5.2 0 0 1 418.3,1205.6 Z" fill="#ff2020"/><path d="M413.8,1203 L418.3,1205.6 A5.2,5.2 0 0 1 409.3,1205.6 Z" fill="#1040ff"/><path d="M413.8,1203 L409.3,1205.6 A5.2,5.2 0 0 1 413.8,1197.8 Z" fill="#169a16"/>
<circle cx="467.4" cy="1203" r="19" fill="#fff" stroke="#000" stroke-width="2.4"/>
<path d="M467.4,1203 L467.4,1197.8 A5.2,5.2 0 0 1 471.9,1205.6 Z" fill="#ff2020"/><path d="M467.4,1203 L471.9,1205.6 A5.2,5.2 0 0 1 462.9,1205.6 Z" fill="#1040ff"/><path d="M467.4,1203 L462.9,1205.6 A5.2,5.2 0 0 1 467.4,1197.8 Z" fill="#169a16"/>
<circle cx="521" cy="1203" r="19" fill="#fff" stroke="#000" stroke-width="2.4"/>
<path d="M521,1203 L521,1197.8 A5.2,5.2 0 0 1 525.5,1205.6 Z" fill="#ff2020"/><path d="M521,1203 L525.5,1205.6 A5.2,5.2 0 0 1 516.5,1205.6 Z" fill="#1040ff"/><path d="M521,1203 L516.5,1205.6 A5.2,5.2 0 0 1 521,1197.8 Z" fill="#169a16"/>
<circle cx="574.6" cy="1203" r="19" fill="#fff" stroke="#000" stroke-width="2.4"/>
<path d="M574.6,1203 L574.6,1197.8 A5.2,5.2 0 0 1 579.1,1205.6 Z" fill="#ff2020"/><path d="M574.6,1203 L579.1,1205.6 A5.2,5.2 0 0 1 570.1,1205.6 Z" fill="#1040ff"/><path d="M574.6,1203 L570.1,1205.6 A5.2,5.2 0 0 1 574.6,1197.8 Z" fill="#169a16"/>
<circle cx="628.2" cy="1203" r="19" fill="#fff" stroke="#000" stroke-width="2.4"/>
<path d="M628.2,1203 L628.2,1197.8 A5.2,5.2 0 0 1 632.7,1205.6 Z" fill="#ff2020"/><path d="M628.2,1203 L632.7,1205.6 A5.2,5.2 0 0 1 623.7,1205.6 Z" fill="#1040ff"/><path d="M628.2,1203 L623.7,1205.6 A5.2,5.2 0 0 1 628.2,1197.8 Z" fill="#169a16"/>
<circle cx="681.8" cy="1203" r="19" fill="#fff" stroke="#000" stroke-width="2.4"/>
<path d="M681.8,1203 L681.8,1197.8 A5.2,5.2 0 0 1 686.3,1205.6 Z" fill="#ff2020"/><path d="M681.8,1203 L686.3,1205.6 A5.2,5.2 0 0 1 677.3,1205.6 Z" fill="#1040ff"/><path d="M681.8,1203 L677.3,1205.6 A5.2,5.2 0 0 1 681.8,1197.8 Z" fill="#169a16"/>
<circle cx="735.4" cy="1203" r="19" fill="#fff" stroke="#000" stroke-width="2.4"/>
<path d="M735.4,1203 L735.4,1197.8 A5.2,5.2 0 0 1 739.9,1205.6 Z" fill="#ff2020"/><path d="M735.4,1203 L739.9,1205.6 A5.2,5.2 0 0 1 730.9,1205.6 Z" fill="#1040ff"/><path d="M735.4,1203 L730.9,1205.6 A5.2,5.2 0 0 1 735.4,1197.8 Z" fill="#169a16"/>
<circle cx="789" cy="1203" r="19" fill="#fff" stroke="#000" stroke-width="2.4"/>
<path d="M789,1203 L789,1197.8 A5.2,5.2 0 0 1 793.5,1205.6 Z" fill="#ff2020"/><path d="M789,1203 L793.5,1205.6 A5.2,5.2 0 0 1 784.5,1205.6 Z" fill="#1040ff"/><path d="M789,1203 L784.5,1205.6 A5.2,5.2 0 0 1 789,1197.8 Z" fill="#169a16"/>
<circle cx="842.6" cy="1203" r="19" fill="#fff" stroke="#000" stroke-width="2.4"/>
<path d="M842.6,1203 L842.6,1197.8 A5.2,5.2 0 0 1 847.1,1205.6 Z" fill="#ff2020"/><path d="M842.6,1203 L847.1,1205.6 A5.2,5.2 0 0 1 838.1,1205.6 Z" fill="#1040ff"/><path d="M842.6,1203 L838.1,1205.6 A5.2,5.2 0 0 1 842.6,1197.8 Z" fill="#169a16"/>
<circle cx="896.2" cy="1203" r="19" fill="#fff" stroke="#000" stroke-width="2.4"/>
<path d="M896.2,1203 L896.2,1197.8 A5.2,5.2 0 0 1 900.7,1205.6 Z" fill="#ff2020"/><path d="M896.2,1203 L900.7,1205.6 A5.2,5.2 0 0 1 891.7,1205.6 Z" fill="#1040ff"/><path d="M896.2,1203 L891.7,1205.6 A5.2,5.2 0 0 1 896.2,1197.8 Z" fill="#169a16"/>
<circle cx="949.8" cy="1203" r="19" fill="#fff" stroke="#000" stroke-width="2.4"/>
<path d="M949.8,1203 L949.8,1197.8 A5.2,5.2 0 0 1 954.3,1205.6 Z" fill="#ff2020"/><path d="M949.8,1203 L954.3,1205.6 A5.2,5.2 0 0 1 945.3,1205.6 Z" fill="#1040ff"/><path d="M949.8,1203 L945.3,1205.6 A5.2,5.2 0 0 1 949.8,1197.8 Z" fill="#169a16"/>
<circle cx="1003.4" cy="1203" r="19" fill="#fff" stroke="#000" stroke-width="2.4"/>
<path d="M1003.4,1203 L1003.4,1197.8 A5.2,5.2 0 0 1 1007.9,1205.6 Z" fill="#ff2020"/><path d="M1003.4,1203 L1007.9,1205.6 A5.2,5.2 0 0 1 998.9,1205.6 Z" fill="#1040ff"/><path d="M1003.4,1203 L998.9,1205.6 A5.2,5.2 0 0 1 1003.4,1197.8 Z" fill="#169a16"/>
<circle cx="1057" cy="1203" r="19" fill="#fff" stroke="#000" stroke-width="2.4"/>
<path d="M1057,1203 L1057,1197.8 A5.2,5.2 0 0 1 1061.5,1205.6 Z" fill="#ff2020"/><path d="M1057,1203 L1061.5,1205.6 A5.2,5.2 0 0 1 1052.5,1205.6 Z" fill="#1040ff"/><path d="M1057,1203 L1052.5,1205.6 A5.2,5.2 0 0 1 1057,1197.8 Z" fill="#169a16"/>
<rect x="162" y="1194" width="70" height="10" fill="#0ee40e"/>
<rect x="244" y="1196" width="20" height="10" fill="#0ee40e"/>
<rect x="1048" y="1194.75" width="19.75" height="10" fill="#0ee40e"/>
<path d="M1092.2,1168.5 V1148.25 H1253.75" fill="none" stroke="#14cc14" stroke-width="2.6" stroke-dasharray="8.3 6.9"/>
<rect x="1103.75" y="1156.5" width="150" height="103.5" fill="none" stroke="#14cc14" stroke-width="2.6" stroke-dasharray="8.3 6.9"/>
<circle cx="1170.2" cy="1177.5" r="18" fill="none" stroke="#000" stroke-width="2.2"/>
<circle cx="1170.2" cy="1177.5" r="3.9" fill="#fff" stroke="#000" stroke-width="1.4"/><path d="M1170.2,1172.9 A4.6,4.6 0 0 0 1170.2,1182.1 Z" fill="#000"/>
<circle cx="1122.2" cy="1200.75" r="18" fill="none" stroke="#000" stroke-width="2.2"/>
<circle cx="1122.2" cy="1200.75" r="3.9" fill="#fff" stroke="#000" stroke-width="1.4"/><path d="M1122.2,1196.15 A4.6,4.6 0 0 0 1122.2,1205.35 Z" fill="#000"/>
<circle cx="1217" cy="1200.75" r="18" fill="none" stroke="#000" stroke-width="2.2"/>
<circle cx="1217" cy="1200.75" r="3.9" fill="#fff" stroke="#000" stroke-width="1.4"/><path d="M1217,1196.15 A4.6,4.6 0 0 0 1217,1205.35 Z" fill="#000"/>
<rect x="1181" y="1167.3" width="19.8" height="19.5" fill="#0ee40e"/><text x="1190.9" y="1182.51" font-size="16" font-family='"Liberation Sans", sans-serif' text-anchor="middle" fill="#000">2</text>
<rect x="1135" y="1188.75" width="20" height="21.25" fill="#0ee40e"/><text x="1145" y="1204.84" font-size="16" font-family='"Liberation Sans", sans-serif' text-anchor="middle" fill="#000">0</text>
<rect x="1228" y="1188.75" width="19.7" height="21.25" fill="#0ee40e"/><text x="1237.85" y="1204.84" font-size="16" font-family='"Liberation Sans", sans-serif' text-anchor="middle" fill="#000">1</text>
</svg>
<div id="win"><svg width="1035" height="864" viewBox="565 281 1035 864">
<rect x="565" y="281" width="1035" height="864" fill="#1f1f1f"/>
<rect x="566" y="317.2" width="1035" height="1.1" fill="#3c3c3c"/>
<circle cx="583.8" cy="299.4" r="8" fill="#fe5f57"/>
<circle cx="609.7" cy="299.4" r="8" fill="#febc2e"/>
<circle cx="635.6" cy="299.4" r="8" fill="#28c840"/>
<text x="979.8" y="304.4" font-size="17" font-weight="bold" font-family='"Liberation Sans", sans-serif' fill="#a9a9a9" textLength="205.8" lengthAdjust="spacingAndGlyphs">Pad KBM Builder (rnbo~)</text>
<rect x="577.9" y="329.9" width="19.2" height="19" fill="none" stroke="#e6e6e6" stroke-width="1.8"/>
<line x1="585" y1="330" x2="585" y2="349" stroke="#e6e6e6" stroke-width="1.6"/>
<rect x="579.6" y="331.9" width="3" height="2.6" fill="#e6e6e6"/>
<rect x="579.6" y="336.1" width="3" height="2.6" fill="#e6e6e6"/>
<rect x="579.6" y="340.2" width="3" height="2.6" fill="#e6e6e6"/>
<rect x="579.6" y="344.3" width="3" height="2.6" fill="#e6e6e6"/>
<text x="620.2" y="345.6" font-size="14.6" font-weight="bold" font-family='"Liberation Sans", sans-serif' fill="#f2f2f2" textLength="27.5" lengthAdjust="spacingAndGlyphs">75%</text>
<path d="M655.5,336.5 L663,336.5 L659.25,342.5 Z" fill="#e6e6e6"/>
<g stroke="#8a8a8a" stroke-width="1.6" fill="none">
<line x1="704.5" y1="329.3" x2="704.5" y2="350.2"/>
<line x1="707.3" y1="329.9" x2="724.8" y2="329.9"/>
<line x1="707.3" y1="333" x2="724.8" y2="333"/>
<line x1="707.3" y1="345.6" x2="724.8" y2="345.6"/>
<line x1="707.3" y1="349.4" x2="724.8" y2="349.4"/>
<rect x="707.5" y="334.5" width="17" height="10" stroke="#444" stroke-width="1"/>
<path d="M762,329.8 L746,329.8 Q742.8,329.8 742.8,333 L742.8,346.3 Q742.8,349.5 746,349.5 L762,349.5"/>
</g>
<text x="753.8" y="343.5" font-size="11" font-style="italic" font-family='"Liberation Serif", serif' text-anchor="middle" fill="#8a8a8a">m</text>
<path d="M779.3,333.3 H800.3 V344.5 H798 V349.8 L793,344.5 H779.3 Z" fill="#8a8a8a"/>
<g stroke="#8a8a8a" stroke-width="1.7" fill="none">
<rect x="817.9" y="329.9" width="19.3" height="19"/>
<path d="M822.5,334.5 L832.6,344.5 M832.6,334.5 L822.5,344.5"/>
<rect x="893.7" y="329.9" width="19.1" height="19"/>
<circle cx="903.2" cy="339.4" r="4.9"/>
<rect x="931.2" y="329.9" width="19" height="19"/>
<rect x="968.9" y="329.9" width="19.2" height="19"/>
<line x1="971.8" y1="339.4" x2="985.2" y2="339.4"/>
</g>
<rect x="855" y="329" width="21" height="20.8" fill="#8a8a8a"/>
<circle cx="859.2" cy="333" r="1.1" fill="#222"/>
<circle cx="859.2" cy="345.8" r="1.1" fill="#222"/>
<circle cx="871.8" cy="333" r="1.1" fill="#222"/>
<circle cx="871.8" cy="345.8" r="1.1" fill="#222"/>
<path d="M934,335 L940,339.5 L934,344 Z" fill="#8a8a8a"/><circle cx="942.2" cy="345" r="1.1" fill="#8a8a8a"/>
<path d="M937.3,354.8 L944.7,354.8 L941,358.7 Z" fill="#8a8a8a"/>
<path d="M974.7,354.8 L982.1,354.8 L978.4,358.7 Z" fill="#8a8a8a"/>
<path d="M1030,339 L1038.6,330.5 L1047,339 L1038.6,347.8 Z" fill="none" stroke="#8a8a8a" stroke-width="1.7"/>
<path d="M1031,339.5 L1046,339.5 L1038.6,347 Z" fill="#8a8a8a"/>
<path d="M1036,329.5 L1040,333.5" stroke="#8a8a8a" stroke-width="1.5"/>
<path d="M1047.5,340 Q1045,344 1047.5,345 Q1050,344 1047.5,340 Z" fill="#8a8a8a"/>
<rect x="1543.1" y="328.1" width="2.7" height="3.6" fill="#f4f4f4"/>
<rect x="1547.1" y="328.1" width="2.7" height="3.6" fill="#f4f4f4"/>
<rect x="1551.1" y="328.1" width="2.7" height="3.6" fill="#f4f4f4"/>
<rect x="1527.1" y="333.3" width="2.7" height="3.6" fill="#f4f4f4"/>
<rect x="1531.1" y="333.3" width="2.7" height="3.6" fill="#f4f4f4"/>
<rect x="1535.1" y="333.3" width="2.7" height="3.6" fill="#f4f4f4"/>
<rect x="1539.1" y="333.3" width="2.7" height="3.6" fill="#f4f4f4"/>
<rect x="1543.1" y="333.3" width="2.7" height="3.6" fill="#f4f4f4"/>
<rect x="1547.1" y="333.3" width="2.7" height="3.6" fill="#f4f4f4"/>
<rect x="1551.1" y="333.3" width="2.7" height="3.6" fill="#f4f4f4"/>
<rect x="1527.1" y="338.5" width="2.7" height="3.6" fill="#f4f4f4"/>
<rect x="1531.1" y="338.5" width="2.7" height="3.6" fill="#f0a420"/>
<rect x="1535.1" y="338.5" width="2.7" height="3.6" fill="#f4f4f4"/>
<rect x="1539.1" y="338.5" width="2.7" height="3.6" fill="#f4f4f4"/>
<rect x="1543.1" y="338.5" width="2.7" height="3.6" fill="#f4f4f4"/>
<rect x="1547.1" y="338.5" width="2.7" height="3.6" fill="#f4f4f4"/>
<rect x="1551.1" y="338.5" width="2.7" height="3.6" fill="#f4f4f4"/>
<rect x="1527.1" y="343.7" width="2.7" height="3.6" fill="#f4f4f4"/>
<rect x="1531.1" y="343.7" width="2.7" height="3.6" fill="#f4f4f4"/>
<rect x="1535.1" y="343.7" width="2.7" height="3.6" fill="#f4f4f4"/>
<rect x="1539.1" y="343.7" width="2.7" height="3.6" fill="#f4f4f4"/>
<rect x="1543.1" y="343.7" width="2.7" height="3.6" fill="#f4f4f4"/>
<rect x="1547.1" y="343.7" width="2.7" height="3.6" fill="#f4f4f4"/>
<rect x="1551.1" y="343.7" width="2.7" height="3.6" fill="#f4f4f4"/>
<rect x="1527.1" y="348.9" width="2.7" height="3.6" fill="#f4f4f4"/>
<rect x="1531.1" y="348.9" width="2.7" height="3.6" fill="#f4f4f4"/>
<rect x="1535.1" y="348.9" width="2.7" height="3.6" fill="#f4f4f4"/>
<rect x="1539.1" y="348.9" width="2.7" height="3.6" fill="#f4f4f4"/>
<rect x="1543.1" y="348.9" width="2.7" height="3.6" fill="#f4f4f4"/>
<rect x="609.4" y="362" width="947.6" height="739" fill="#3d3d3d"/>
<text x="732.25" y="379" font-size="12.3" font-family='"Liberation Sans", sans-serif' textLength="758" lengthAdjust="spacingAndGlyphs"><tspan fill="#d6d6d6" stroke="#d6d6d6" stroke-width="0.25">This example generates a KBM keyboard mapping list for the Move based on an incoming scala scale and the MIDIMid, Tuning, MIDIRef and FitScale</tspan></text>
<text x="732.25" y="393" font-size="12.3" font-family='"Liberation Sans", sans-serif' textLength="62" lengthAdjust="spacingAndGlyphs"><tspan fill="#d6d6d6" stroke="#d6d6d6" stroke-width="0.25">parameters.</tspan></text>
<path d="M628.4,386 L628.4,611" fill="none" stroke="#2b2b2b" stroke-width="4.3" stroke-linecap="round" stroke-linejoin="round"/>
<path d="M656.7,418 C656.7,480 628.4,560 628.4,611" fill="none" stroke="#2b2b2b" stroke-width="4.3" stroke-linecap="round" stroke-linejoin="round"/>
<path d="M706.3,447 L706.3,459" fill="none" stroke="#2b2b2b" stroke-width="4.3" stroke-linecap="round" stroke-linejoin="round"/>
<path d="M706.3,481 C706.3,492 700,492 690,492 L682,492 C672,492 670.2,498 670.2,510 L670.2,645" fill="none" stroke="#2b2b2b" stroke-width="4.3" stroke-linecap="round" stroke-linejoin="round"/>
<path d="M716.2,481 L716.2,494.5" fill="none" stroke="#2b2b2b" stroke-width="4.3" stroke-linecap="round" stroke-linejoin="round"/>
<path d="M716.2,518 L716.2,628 C716.2,636 720,637.8 728,637.8 L794,637.8 C802,637.8 804.9,642 804.9,652 L804.9,712 C804.9,720 802,722.8 794,722.8 L650,722.8 C641,722.8 636,727 636,735" fill="none" stroke="#2b2b2b" stroke-width="4.3" stroke-linecap="round" stroke-linejoin="round"/>
<path d="M795.6,478 L795.6,493" fill="none" stroke="#2b2b2b" stroke-width="4.3" stroke-linecap="round" stroke-linejoin="round"/>
<path d="M795.2,515 C795.2,527 786,528 776,528 C766,528 763.6,534 763.6,545 L763.6,620 C763.6,628 760,631.4 752,631.4 L686,631.4 C676,631.4 670.2,636 670.2,645" fill="none" stroke="#2b2b2b" stroke-width="4.3" stroke-linecap="round" stroke-linejoin="round"/>
<path d="M806.2,515 L806.2,529.5" fill="none" stroke="#2b2b2b" stroke-width="4.3" stroke-linecap="round" stroke-linejoin="round"/>
<path d="M806.2,551 L806.2,712 C806.2,720 803,722.8 796,722.8" fill="none" stroke="#2b2b2b" stroke-width="4.3" stroke-linecap="round" stroke-linejoin="round"/>
<path d="M873.6,514 L873.6,530" fill="none" stroke="#2b2b2b" stroke-width="4.3" stroke-linecap="round" stroke-linejoin="round"/>
<path d="M873,552 L873,556 C873,566 861.3,561 861.3,571 L861.3,623 C861.3,629 858,631.4 851,631.4 L760,631.4" fill="none" stroke="#2b2b2b" stroke-width="4.3" stroke-linecap="round" stroke-linejoin="round"/>
<path d="M884.3,552 L884.3,566.5" fill="none" stroke="#2b2b2b" stroke-width="4.3" stroke-linecap="round" stroke-linejoin="round"/>
<path d="M884.5,588 L884.5,712 C884.5,720 881,722.8 873,722.8 L800,722.8" fill="none" stroke="#2b2b2b" stroke-width="4.3" stroke-linecap="round" stroke-linejoin="round"/>
<path d="M933,551.5 L933,568" fill="none" stroke="#2b2b2b" stroke-width="4.3" stroke-linecap="round" stroke-linejoin="round"/>
<path d="M933.3,590 L933.3,597 C933.3,607 921.8,601 921.8,611 L921.8,621 C921.8,628 917,631.4 909,631.4 L850,631.4" fill="none" stroke="#2b2b2b" stroke-width="4.3" stroke-linecap="round" stroke-linejoin="round"/>
<path d="M944,590 L944,604" fill="none" stroke="#2b2b2b" stroke-width="4.3" stroke-linecap="round" stroke-linejoin="round"/>
<path d="M944,625.5 L944,712 C944,720 940,722.8 932,722.8 L880,722.8" fill="none" stroke="#2b2b2b" stroke-width="4.3" stroke-linecap="round" stroke-linejoin="round"/>
<path d="M628.4,632 C628.4,638 634,638 645,638 L660,638 C668,638 670.2,640 670.2,645" fill="none" stroke="#2b2b2b" stroke-width="4.3" stroke-linecap="round" stroke-linejoin="round"/>
<path d="M639,632 L639,672 C639,678 644,679.7 652,679.7 L686,679.7 C692,679.7 694.5,681 694.5,684" fill="none" stroke="#2b2b2b" stroke-width="4.3" stroke-linecap="round" stroke-linejoin="round"/>
<path d="M670.2,666 L670.2,684" fill="none" stroke="#2b2b2b" stroke-width="4.3" stroke-linecap="round" stroke-linejoin="round"/>
<path d="M670.2,705.7 C670.2,722 636,718 636,735" fill="none" stroke="#2b2b2b" stroke-width="4.3" stroke-linecap="round" stroke-linejoin="round"/>
<path d="M636,1052 L636,1065" fill="none" stroke="#2b2b2b" stroke-width="4.3" stroke-linecap="round" stroke-linejoin="round"/>
<path d="M628.4,386 L628.4,611" fill="none" stroke="#8d8d8d" stroke-width="2.9" stroke-linecap="round" stroke-linejoin="round"/>
<path d="M656.7,418 C656.7,480 628.4,560 628.4,611" fill="none" stroke="#8d8d8d" stroke-width="2.9" stroke-linecap="round" stroke-linejoin="round"/>
<path d="M706.3,447 L706.3,459" fill="none" stroke="#8d8d8d" stroke-width="2.9" stroke-linecap="round" stroke-linejoin="round"/>
<path d="M706.3,481 C706.3,492 700,492 690,492 L682,492 C672,492 670.2,498 670.2,510 L670.2,645" fill="none" stroke="#8d8d8d" stroke-width="2.9" stroke-linecap="round" stroke-linejoin="round"/>
<path d="M716.2,481 L716.2,494.5" fill="none" stroke="#8d8d8d" stroke-width="2.9" stroke-linecap="round" stroke-linejoin="round"/>
<path d="M716.2,518 L716.2,628 C716.2,636 720,637.8 728,637.8 L794,637.8 C802,637.8 804.9,642 804.9,652 L804.9,712 C804.9,720 802,722.8 794,722.8 L650,722.8 C641,722.8 636,727 636,735" fill="none" stroke="#8d8d8d" stroke-width="2.9" stroke-linecap="round" stroke-linejoin="round"/>
<path d="M795.6,478 L795.6,493" fill="none" stroke="#8d8d8d" stroke-width="2.9" stroke-linecap="round" stroke-linejoin="round"/>
<path d="M795.2,515 C795.2,527 786,528 776,528 C766,528 763.6,534 763.6,545 L763.6,620 C763.6,628 760,631.4 752,631.4 L686,631.4 C676,631.4 670.2,636 670.2,645" fill="none" stroke="#8d8d8d" stroke-width="2.9" stroke-linecap="round" stroke-linejoin="round"/>
<path d="M806.2,515 L806.2,529.5" fill="none" stroke="#8d8d8d" stroke-width="2.9" stroke-linecap="round" stroke-linejoin="round"/>
<path d="M806.2,551 L806.2,712 C806.2,720 803,722.8 796,722.8" fill="none" stroke="#8d8d8d" stroke-width="2.9" stroke-linecap="round" stroke-linejoin="round"/>
<path d="M873.6,514 L873.6,530" fill="none" stroke="#8d8d8d" stroke-width="2.9" stroke-linecap="round" stroke-linejoin="round"/>
<path d="M873,552 L873,556 C873,566 861.3,561 861.3,571 L861.3,623 C861.3,629 858,631.4 851,631.4 L760,631.4" fill="none" stroke="#8d8d8d" stroke-width="2.9" stroke-linecap="round" stroke-linejoin="round"/>
<path d="M884.3,552 L884.3,566.5" fill="none" stroke="#8d8d8d" stroke-width="2.9" stroke-linecap="round" stroke-linejoin="round"/>
<path d="M884.5,588 L884.5,712 C884.5,720 881,722.8 873,722.8 L800,722.8" fill="none" stroke="#8d8d8d" stroke-width="2.9" stroke-linecap="round" stroke-linejoin="round"/>
<path d="M933,551.5 L933,568" fill="none" stroke="#8d8d8d" stroke-width="2.9" stroke-linecap="round" stroke-linejoin="round"/>
<path d="M933.3,590 L933.3,597 C933.3,607 921.8,601 921.8,611 L921.8,621 C921.8,628 917,631.4 909,631.4 L850,631.4" fill="none" stroke="#8d8d8d" stroke-width="2.9" stroke-linecap="round" stroke-linejoin="round"/>
<path d="M944,590 L944,604" fill="none" stroke="#8d8d8d" stroke-width="2.9" stroke-linecap="round" stroke-linejoin="round"/>
<path d="M944,625.5 L944,712 C944,720 940,722.8 932,722.8 L880,722.8" fill="none" stroke="#8d8d8d" stroke-width="2.9" stroke-linecap="round" stroke-linejoin="round"/>
<path d="M628.4,632 C628.4,638 634,638 645,638 L660,638 C668,638 670.2,640 670.2,645" fill="none" stroke="#8d8d8d" stroke-width="2.9" stroke-linecap="round" stroke-linejoin="round"/>
<path d="M639,632 L639,672 C639,678 644,679.7 652,679.7 L686,679.7 C692,679.7 694.5,681 694.5,684" fill="none" stroke="#8d8d8d" stroke-width="2.9" stroke-linecap="round" stroke-linejoin="round"/>
<path d="M670.2,666 L670.2,684" fill="none" stroke="#8d8d8d" stroke-width="2.9" stroke-linecap="round" stroke-linejoin="round"/>
<path d="M670.2,705.7 C670.2,722 636,718 636,735" fill="none" stroke="#8d8d8d" stroke-width="2.9" stroke-linecap="round" stroke-linejoin="round"/>
<path d="M636,1052 L636,1065" fill="none" stroke="#8d8d8d" stroke-width="2.9" stroke-linecap="round" stroke-linejoin="round"/>
<rect x="619.3" y="364" width="89.5" height="4.3" fill="#7b7b7b"/>
<rect x="619.3" y="368.3" width="89.5" height="13.4" fill="#1d1d1d"/>
<rect x="619.3" y="381.7" width="89.5" height="4.3" fill="#7b7b7b"/>
<path d="M625.4,386 A3,3 0 0 1 631.4,386" fill="none" stroke="#c9d85a" stroke-width="1.4"/>
<text x="623" y="379" font-size="12.3" font-family='"Liberation Sans", sans-serif' textLength="81.5" lengthAdjust="spacingAndGlyphs"><tspan fill="#f5c46c" stroke="#f5c46c" stroke-width="0.28">inport </tspan><tspan fill="#efefef" stroke="#efefef" stroke-width="0.28">/rnbo/scl</tspan></text>
<rect x="648" y="396.6" width="539.5" height="4.3" fill="#7b7b7b"/>
<rect x="648" y="400.9" width="539.5" height="13.4" fill="#1d1d1d"/>
<rect x="648" y="414.3" width="539.5" height="4.3" fill="#7b7b7b"/>
<path d="M653.1,396.6 A3.6,3.6 0 0 0 660.3,396.6 Z" fill="#a0a0a0"/>
<path d="M653.7,418.6 A3,3 0 0 1 659.7,418.6" fill="none" stroke="#c9d85a" stroke-width="1.4"/>
<text x="651.7" y="411.6" font-size="12.3" font-family='"Liberation Sans", sans-serif' textLength="531.5" lengthAdjust="spacingAndGlyphs"><tspan fill="#f5c46c" stroke="#f5c46c" stroke-width="0.28">loadmess </tspan><tspan fill="#efefef" stroke="#efefef" stroke-width="0.28">12. 100. 0. 200. 0. 300. 0. 400. 0. 500. 0. 600. 0. 700. 0. 800. 0. 900. 0. 1000. 0. 1100. 0. 2. 1.</tspan></text>
<rect x="697" y="424.3" width="393.5" height="4.3" fill="#7b7b7b"/>
<rect x="697" y="428.6" width="393.5" height="13.4" fill="#1d1d1d"/>
<rect x="697" y="442" width="393.5" height="4.3" fill="#7b7b7b"/>
<path d="M702.7,424.3 A3.6,3.6 0 0 0 709.9,424.3 Z" fill="#a0a0a0"/>
<path d="M1077.4,424.3 A3.6,3.6 0 0 0 1084.6,424.3 Z" fill="#a0a0a0"/>
<path d="M703.3,446.3 A3,3 0 0 1 709.3,446.3" fill="none" stroke="#c9d85a" stroke-width="1.4"/>
<path d="M1077.4,446.3 A3.6,3.6 0 0 1 1084.6,446.3 Z" fill="#a0a0a0"/>
<text x="700.7" y="439.3" font-size="12.3" font-family='"Liberation Sans", sans-serif' textLength="385.5" lengthAdjust="spacingAndGlyphs"><tspan fill="#f5c46c" stroke="#f5c46c" stroke-width="0.28">param </tspan><tspan fill="#efefef" stroke="#efefef" stroke-width="0.28">MIDIMid </tspan><tspan fill="#8fbaf5" stroke="#8fbaf5" stroke-width="0.28">@min </tspan><tspan fill="#f8c9b6" stroke="#f8c9b6" stroke-width="0.28">0 </tspan><tspan fill="#8fbaf5" stroke="#8fbaf5" stroke-width="0.28">@max </tspan><tspan fill="#f8c9b6" stroke="#f8c9b6" stroke-width="0.28">120 </tspan><tspan fill="#8fbaf5" stroke="#8fbaf5" stroke-width="0.28">@steps </tspan><tspan fill="#f8c9b6" stroke="#f8c9b6" stroke-width="0.28">121 </tspan><tspan fill="#8fbaf5" stroke="#8fbaf5" stroke-width="0.28">@value </tspan><tspan fill="#f8c9b6" stroke="#f8c9b6" stroke-width="0.28">60 </tspan><tspan fill="#8fbaf5" stroke="#8fbaf5" stroke-width="0.28">@displayorder </tspan><tspan fill="#f8c9b6" stroke="#f8c9b6" stroke-width="0.28">1</tspan></text>
<rect x="697" y="458.8" width="28.6" height="4.3" fill="#7b7b7b"/>
<rect x="697" y="463.1" width="28.6" height="13.4" fill="#1d1d1d"/>
<rect x="697" y="476.5" width="28.6" height="4.3" fill="#7b7b7b"/>
<path d="M703.3,458.8 A3,3 0 0 0 709.3,458.8" fill="none" stroke="#f2a29a" stroke-width="1.4"/>
<path d="M703.3,480.8 A3,3 0 0 1 709.3,480.8" fill="none" stroke="#c9d85a" stroke-width="1.4"/>
<path d="M713.2,480.8 A3,3 0 0 1 719.2,480.8" fill="none" stroke="#c9d85a" stroke-width="1.4"/>
<text x="700.7" y="473.8" font-size="12.3" font-family='"Liberation Sans", sans-serif' textLength="20.6" lengthAdjust="spacingAndGlyphs"><tspan fill="#f5c46c" stroke="#f5c46c" stroke-width="0.28">t </tspan><tspan fill="#efefef" stroke="#efefef" stroke-width="0.28">b f</tspan></text>
<rect x="707.3" y="494.5" width="45.5" height="4.3" fill="#7b7b7b"/>
<rect x="707.3" y="498.8" width="45.5" height="13.4" fill="#1d1d1d"/>
<rect x="707.3" y="512.2" width="45.5" height="4.3" fill="#7b7b7b"/>
<path d="M713.2,494.5 A3,3 0 0 0 719.2,494.5" fill="none" stroke="#f2a29a" stroke-width="1.4"/>
<path d="M713.2,516.5 A3,3 0 0 1 719.2,516.5" fill="none" stroke="#c9d85a" stroke-width="1.4"/>
<text x="711" y="509.5" font-size="12.3" font-family='"Liberation Sans", sans-serif' textLength="37.5" lengthAdjust="spacingAndGlyphs"><tspan fill="#f5c46c" stroke="#f5c46c" stroke-width="0.28">set </tspan><tspan fill="#efefef" stroke="#efefef" stroke-width="0.28">mid</tspan></text>
<rect x="786.6" y="454.7" width="338.4" height="4.3" fill="#7b7b7b"/>
<rect x="786.6" y="459" width="338.4" height="13.4" fill="#1d1d1d"/>
<rect x="786.6" y="472.4" width="338.4" height="4.3" fill="#7b7b7b"/>
<path d="M792,454.7 A3.6,3.6 0 0 0 799.2,454.7 Z" fill="#a0a0a0"/>
<path d="M1112.4,454.7 A3.6,3.6 0 0 0 1119.6,454.7 Z" fill="#a0a0a0"/>
<path d="M792.6,476.7 A3,3 0 0 1 798.6,476.7" fill="none" stroke="#c9d85a" stroke-width="1.4"/>
<path d="M1112.4,476.7 A3.6,3.6 0 0 1 1119.6,476.7 Z" fill="#a0a0a0"/>
<text x="790.3" y="469.7" font-size="12.3" font-family='"Liberation Sans", sans-serif' textLength="330.4" lengthAdjust="spacingAndGlyphs"><tspan fill="#f5c46c" stroke="#f5c46c" stroke-width="0.28">param </tspan><tspan fill="#efefef" stroke="#efefef" stroke-width="0.28">Tuning </tspan><tspan fill="#8fbaf5" stroke="#8fbaf5" stroke-width="0.28">@min </tspan><tspan fill="#f8c9b6" stroke="#f8c9b6" stroke-width="0.28">20 </tspan><tspan fill="#8fbaf5" stroke="#8fbaf5" stroke-width="0.28">@max </tspan><tspan fill="#f8c9b6" stroke="#f8c9b6" stroke-width="0.28">1000 </tspan><tspan fill="#8fbaf5" stroke="#8fbaf5" stroke-width="0.28">@value </tspan><tspan fill="#f8c9b6" stroke="#f8c9b6" stroke-width="0.28">440 </tspan><tspan fill="#8fbaf5" stroke="#8fbaf5" stroke-width="0.28">@displayorder </tspan><tspan fill="#f8c9b6" stroke="#f8c9b6" stroke-width="0.28">2</tspan></text>
<rect x="786.6" y="492.8" width="28.4" height="4.3" fill="#7b7b7b"/>
<rect x="786.6" y="497.1" width="28.4" height="13.4" fill="#1d1d1d"/>
<rect x="786.6" y="510.5" width="28.4" height="4.3" fill="#7b7b7b"/>
<path d="M792.6,492.8 A3,3 0 0 0 798.6,492.8" fill="none" stroke="#f2a29a" stroke-width="1.4"/>
<path d="M792.2,514.8 A3,3 0 0 1 798.2,514.8" fill="none" stroke="#c9d85a" stroke-width="1.4"/>
<path d="M803.2,514.8 A3,3 0 0 1 809.2,514.8" fill="none" stroke="#c9d85a" stroke-width="1.4"/>
<text x="790.3" y="507.8" font-size="12.3" font-family='"Liberation Sans", sans-serif' textLength="20.4" lengthAdjust="spacingAndGlyphs"><tspan fill="#f5c46c" stroke="#f5c46c" stroke-width="0.28">t </tspan><tspan fill="#efefef" stroke="#efefef" stroke-width="0.28">b f</tspan></text>
<rect x="864.5" y="492.5" width="391.25" height="4.3" fill="#7b7b7b"/>
<rect x="864.5" y="496.8" width="391.25" height="13.4" fill="#1d1d1d"/>
<rect x="864.5" y="510.2" width="391.25" height="4.3" fill="#7b7b7b"/>
<path d="M870,492.5 A3.6,3.6 0 0 0 877.2,492.5 Z" fill="#a0a0a0"/>
<path d="M1242.9,492.5 A3.6,3.6 0 0 0 1250.1,492.5 Z" fill="#a0a0a0"/>
<path d="M870.6,514.5 A3,3 0 0 1 876.6,514.5" fill="none" stroke="#c9d85a" stroke-width="1.4"/>
<path d="M1242.9,514.5 A3.6,3.6 0 0 1 1250.1,514.5 Z" fill="#a0a0a0"/>
<text x="868.2" y="507.5" font-size="12.3" font-family='"Liberation Sans", sans-serif' textLength="383.25" lengthAdjust="spacingAndGlyphs"><tspan fill="#f5c46c" stroke="#f5c46c" stroke-width="0.28">param </tspan><tspan fill="#efefef" stroke="#efefef" stroke-width="0.28">MIDIRef </tspan><tspan fill="#8fbaf5" stroke="#8fbaf5" stroke-width="0.28">@min </tspan><tspan fill="#f8c9b6" stroke="#f8c9b6" stroke-width="0.28">0 </tspan><tspan fill="#8fbaf5" stroke="#8fbaf5" stroke-width="0.28">@max </tspan><tspan fill="#f8c9b6" stroke="#f8c9b6" stroke-width="0.28">120 </tspan><tspan fill="#8fbaf5" stroke="#8fbaf5" stroke-width="0.28">@steps </tspan><tspan fill="#f8c9b6" stroke="#f8c9b6" stroke-width="0.28">121 </tspan><tspan fill="#8fbaf5" stroke="#8fbaf5" stroke-width="0.28">@value </tspan><tspan fill="#f8c9b6" stroke="#f8c9b6" stroke-width="0.28">69 </tspan><tspan fill="#8fbaf5" stroke="#8fbaf5" stroke-width="0.28">@displayorder </tspan><tspan fill="#f8c9b6" stroke="#f8c9b6" stroke-width="0.28">3</tspan></text>
<rect x="797" y="529" width="59" height="4.3" fill="#7b7b7b"/>
<rect x="797" y="533.3" width="59" height="13.4" fill="#1d1d1d"/>
<rect x="797" y="546.7" width="59" height="4.3" fill="#7b7b7b"/>
<path d="M803.2,529 A3,3 0 0 0 809.2,529" fill="none" stroke="#f2a29a" stroke-width="1.4"/>
<path d="M803.2,551 A3,3 0 0 1 809.2,551" fill="none" stroke="#c9d85a" stroke-width="1.4"/>
<text x="800.7" y="544" font-size="12.3" font-family='"Liberation Sans", sans-serif' textLength="51" lengthAdjust="spacingAndGlyphs"><tspan fill="#f5c46c" stroke="#f5c46c" stroke-width="0.28">set </tspan><tspan fill="#efefef" stroke="#efefef" stroke-width="0.28">tuning</tspan></text>
<rect x="864.8" y="530" width="28.2" height="4.3" fill="#7b7b7b"/>
<rect x="864.8" y="534.3" width="28.2" height="13.4" fill="#1d1d1d"/>
<rect x="864.8" y="547.7" width="28.2" height="4.3" fill="#7b7b7b"/>
<path d="M870.6,530 A3,3 0 0 0 876.6,530" fill="none" stroke="#f2a29a" stroke-width="1.4"/>
<path d="M870,552 A3,3 0 0 1 876,552" fill="none" stroke="#c9d85a" stroke-width="1.4"/>
<path d="M881.3,552 A3,3 0 0 1 887.3,552" fill="none" stroke="#c9d85a" stroke-width="1.4"/>
<text x="868.5" y="545" font-size="12.3" font-family='"Liberation Sans", sans-serif' textLength="20.2" lengthAdjust="spacingAndGlyphs"><tspan fill="#f5c46c" stroke="#f5c46c" stroke-width="0.28">t </tspan><tspan fill="#efefef" stroke="#efefef" stroke-width="0.28">b f</tspan></text>
<rect x="923.75" y="530" width="295" height="4.3" fill="#7b7b7b"/>
<rect x="923.75" y="534.3" width="295" height="13.4" fill="#1d1d1d"/>
<rect x="923.75" y="547.7" width="295" height="4.3" fill="#7b7b7b"/>
<path d="M929.4,530 A3.6,3.6 0 0 0 936.6,530 Z" fill="#a0a0a0"/>
<path d="M1205.9,530 A3.6,3.6 0 0 0 1213.1,530 Z" fill="#a0a0a0"/>
<path d="M930,552 A3,3 0 0 1 936,552" fill="none" stroke="#c9d85a" stroke-width="1.4"/>
<path d="M1205.9,552 A3.6,3.6 0 0 1 1213.1,552 Z" fill="#a0a0a0"/>
<text x="927.45" y="545" font-size="12.3" font-family='"Liberation Sans", sans-serif' textLength="287" lengthAdjust="spacingAndGlyphs"><tspan fill="#f5c46c" stroke="#f5c46c" stroke-width="0.28">param </tspan><tspan fill="#efefef" stroke="#efefef" stroke-width="0.28">FitScale </tspan><tspan fill="#8fbaf5" stroke="#8fbaf5" stroke-width="0.28">@enum </tspan><tspan fill="#f8c9b6" stroke="#f8c9b6" stroke-width="0.28">off </tspan><tspan fill="#f8c9b6" stroke="#f8c9b6" stroke-width="0.28">on </tspan><tspan fill="#8fbaf5" stroke="#8fbaf5" stroke-width="0.28">@value </tspan><tspan fill="#f8c9b6" stroke="#f8c9b6" stroke-width="0.28">1 </tspan><tspan fill="#8fbaf5" stroke="#8fbaf5" stroke-width="0.28">@displayorder </tspan><tspan fill="#f8c9b6" stroke="#f8c9b6" stroke-width="0.28">4</tspan></text>
<rect x="875.5" y="566.5" width="40.5" height="4.3" fill="#7b7b7b"/>
<rect x="875.5" y="570.8" width="40.5" height="13.4" fill="#1d1d1d"/>
<rect x="875.5" y="584.2" width="40.5" height="4.3" fill="#7b7b7b"/>
<path d="M881.3,566.5 A3,3 0 0 0 887.3,566.5" fill="none" stroke="#f2a29a" stroke-width="1.4"/>
<path d="M881.5,588.5 A3,3 0 0 1 887.5,588.5" fill="none" stroke="#c9d85a" stroke-width="1.4"/>
<text x="879.2" y="581.5" font-size="12.3" font-family='"Liberation Sans", sans-serif' textLength="32.5" lengthAdjust="spacingAndGlyphs"><tspan fill="#f5c46c" stroke="#f5c46c" stroke-width="0.28">set </tspan><tspan fill="#efefef" stroke="#efefef" stroke-width="0.28">ref</tspan></text>
<rect x="924" y="568" width="28.7" height="4.3" fill="#7b7b7b"/>
<rect x="924" y="572.3" width="28.7" height="13.4" fill="#1d1d1d"/>
<rect x="924" y="585.7" width="28.7" height="4.3" fill="#7b7b7b"/>
<path d="M930,568 A3,3 0 0 0 936,568" fill="none" stroke="#f2a29a" stroke-width="1.4"/>
<path d="M930.3,590 A3,3 0 0 1 936.3,590" fill="none" stroke="#c9d85a" stroke-width="1.4"/>
<path d="M941,590 A3,3 0 0 1 947,590" fill="none" stroke="#c9d85a" stroke-width="1.4"/>
<text x="927.7" y="583" font-size="12.3" font-family='"Liberation Sans", sans-serif' textLength="20.7" lengthAdjust="spacingAndGlyphs"><tspan fill="#f5c46c" stroke="#f5c46c" stroke-width="0.28">t </tspan><tspan fill="#efefef" stroke="#efefef" stroke-width="0.28">b f</tspan></text>
<rect x="935" y="604" width="37.4" height="4.3" fill="#7b7b7b"/>
<rect x="935" y="608.3" width="37.4" height="13.4" fill="#1d1d1d"/>
<rect x="935" y="621.7" width="37.4" height="4.3" fill="#7b7b7b"/>
<path d="M941,604 A3,3 0 0 0 947,604" fill="none" stroke="#f2a29a" stroke-width="1.4"/>
<path d="M941,626 A3,3 0 0 1 947,626" fill="none" stroke="#c9d85a" stroke-width="1.4"/>
<text x="938.7" y="619" font-size="12.3" font-family='"Liberation Sans", sans-serif' textLength="29.4" lengthAdjust="spacingAndGlyphs"><tspan fill="#f5c46c" stroke="#f5c46c" stroke-width="0.28">set </tspan><tspan fill="#efefef" stroke="#efefef" stroke-width="0.28">fit</tspan></text>
<rect x="619.5" y="611" width="28.5" height="4.3" fill="#7b7b7b"/>
<rect x="619.5" y="615.3" width="28.5" height="13.4" fill="#1d1d1d"/>
<rect x="619.5" y="628.7" width="28.5" height="4.3" fill="#7b7b7b"/>
<path d="M625.4,611 A3,3 0 0 0 631.4,611" fill="none" stroke="#f2a29a" stroke-width="1.4"/>
<path d="M625.4,633 A3,3 0 0 1 631.4,633" fill="none" stroke="#c9d85a" stroke-width="1.4"/>
<path d="M636,633 A3,3 0 0 1 642,633" fill="none" stroke="#c9d85a" stroke-width="1.4"/>
<text x="623.2" y="626" font-size="12.3" font-family='"Liberation Sans", sans-serif' textLength="20.5" lengthAdjust="spacingAndGlyphs"><tspan fill="#f5c46c" stroke="#f5c46c" stroke-width="0.28">t </tspan><tspan fill="#efefef" stroke="#efefef" stroke-width="0.28">b l</tspan></text>
<rect x="661.8" y="645" width="67.7" height="4.3" fill="#7b7b7b"/>
<rect x="661.8" y="649.3" width="67.7" height="13.4" fill="#1d1d1d"/>
<rect x="661.8" y="662.7" width="67.7" height="4.3" fill="#7b7b7b"/>
<path d="M667.2,645 A3,3 0 0 0 673.2,645" fill="none" stroke="#f2a29a" stroke-width="1.4"/>
<path d="M667.2,667 A3,3 0 0 1 673.2,667" fill="none" stroke="#c9d85a" stroke-width="1.4"/>
<text x="665.5" y="660" font-size="12.3" font-family='"Liberation Sans", sans-serif' textLength="59.7" lengthAdjust="spacingAndGlyphs"><tspan fill="#f5c46c" stroke="#f5c46c" stroke-width="0.28">p </tspan><tspan fill="#efefef" stroke="#efefef" stroke-width="0.28">hysteresis</tspan></text>
<rect x="661.8" y="684" width="41.5" height="4.3" fill="#7b7b7b"/>
<rect x="661.8" y="688.3" width="41.5" height="13.4" fill="#1d1d1d"/>
<rect x="661.8" y="701.7" width="41.5" height="4.3" fill="#7b7b7b"/>
<path d="M667.2,684 A3,3 0 0 0 673.2,684" fill="none" stroke="#f2a29a" stroke-width="1.4"/>
<path d="M691.5,684 A3,3 0 0 0 697.5,684" fill="none" stroke="#7fd3e6" stroke-width="1.4"/>
<path d="M667.2,706 A3,3 0 0 1 673.2,706" fill="none" stroke="#c9d85a" stroke-width="1.4"/>
<text x="665.5" y="699" font-size="12.3" font-family='"Liberation Sans", sans-serif' textLength="33.5" lengthAdjust="spacingAndGlyphs"><tspan fill="#f5c46c" stroke="#f5c46c" stroke-width="0.28">list.reg</tspan></text>
<rect x="627" y="1065" width="130" height="4.3" fill="#7b7b7b"/>
<rect x="627" y="1069.3" width="130" height="13.4" fill="#1d1d1d"/>
<rect x="627" y="1082.7" width="130" height="4.3" fill="#7b7b7b"/>
<path d="M633,1065 A3,3 0 0 0 639,1065" fill="none" stroke="#f2a29a" stroke-width="1.4"/>
<text textLength="98.6" lengthAdjust="spacingAndGlyphs" x="630.7" y="1080" font-size="12.3" font-family='"Liberation Sans", sans-serif'><tspan fill="#f5c46c" stroke="#f5c46c" stroke-width="0.28">outport </tspan><tspan fill="#efefef" stroke="#efefef" stroke-width="0.28">/rnbo/kbm</tspan></text>
<rect x="627" y="734.5" width="887.5" height="317.3" fill="#232323"/>
<rect x="627" y="750.5" width="883.7" height="286.3" fill="#181818"/>
<text x="1509" y="746.3" font-size="10.5" font-weight="bold" font-family='"Liberation Sans", sans-serif' text-anchor="end" fill="#f0f0f0">CodeBox</text>
<rect x="1499.4" y="754.5" width="7.6" height="169.5" fill="#c4c4c4" rx="3.8"/>
<text x="651" y="760.3" font-size="10.6" font-family='"Liberation Mono", monospace' text-anchor="end" fill="#d8d8d8">1</text>
<text x="655" y="761.5" font-size="11.75" font-family='"Liberation Mono", monospace' style="white-space:pre" xml:space="preserve"><tspan fill="#86d2d0" stroke="#86d2d0" stroke-width="0.3">@param </tspan><tspan fill="#a0daf0" stroke="#a0daf0" stroke-width="0.3">fit</tspan><tspan fill="#ececec" stroke="#ececec" stroke-width="0.3"> = </tspan><tspan fill="#b0f8e6" stroke="#b0f8e6" stroke-width="0.3">1</tspan><tspan fill="#ececec" stroke="#ececec" stroke-width="0.3">;</tspan></text>
<text x="651" y="773.98" font-size="10.6" font-family='"Liberation Mono", monospace' text-anchor="end" fill="#d8d8d8">2</text>
<text x="655" y="775.18" font-size="11.75" font-family='"Liberation Mono", monospace' style="white-space:pre" xml:space="preserve"><tspan fill="#86d2d0" stroke="#86d2d0" stroke-width="0.3">@param </tspan><tspan fill="#a0daf0" stroke="#a0daf0" stroke-width="0.3">mid</tspan><tspan fill="#ececec" stroke="#ececec" stroke-width="0.3"> = </tspan><tspan fill="#b0f8e6" stroke="#b0f8e6" stroke-width="0.3">60</tspan><tspan fill="#ececec" stroke="#ececec" stroke-width="0.3">;</tspan></text>
<text x="651" y="787.66" font-size="10.6" font-family='"Liberation Mono", monospace' text-anchor="end" fill="#d8d8d8">3</text>
<text x="655" y="788.86" font-size="11.75" font-family='"Liberation Mono", monospace' style="white-space:pre" xml:space="preserve"><tspan fill="#86d2d0" stroke="#86d2d0" stroke-width="0.3">@param </tspan><tspan fill="#a0daf0" stroke="#a0daf0" stroke-width="0.3">tuning</tspan><tspan fill="#ececec" stroke="#ececec" stroke-width="0.3"> = </tspan><tspan fill="#b0f8e6" stroke="#b0f8e6" stroke-width="0.3">440.0</tspan><tspan fill="#ececec" stroke="#ececec" stroke-width="0.3">;</tspan></text>
<text x="651" y="801.34" font-size="10.6" font-family='"Liberation Mono", monospace' text-anchor="end" fill="#d8d8d8">4</text>
<text x="655" y="802.54" font-size="11.75" font-family='"Liberation Mono", monospace' style="white-space:pre" xml:space="preserve"><tspan fill="#86d2d0" stroke="#86d2d0" stroke-width="0.3">@param </tspan><tspan fill="#a0daf0" stroke="#a0daf0" stroke-width="0.3">ref</tspan><tspan fill="#ececec" stroke="#ececec" stroke-width="0.3"> = </tspan><tspan fill="#b0f8e6" stroke="#b0f8e6" stroke-width="0.3">69</tspan><tspan fill="#ececec" stroke="#ececec" stroke-width="0.3">;</tspan></text>
<text x="651" y="815.02" font-size="10.6" font-family='"Liberation Mono", monospace' text-anchor="end" fill="#d8d8d8">5</text>
<text x="651" y="828.7" font-size="10.6" font-family='"Liberation Mono", monospace' text-anchor="end" fill="#d8d8d8">6</text>
<text x="655" y="829.9" font-size="11.75" font-family='"Liberation Mono", monospace' style="white-space:pre" xml:space="preserve"><tspan fill="#e08ea8" stroke="#e08ea8" stroke-width="0.3">let </tspan><tspan fill="#a0daf0" stroke="#a0daf0" stroke-width="0.3">scl</tspan><tspan fill="#ececec" stroke="#ececec" stroke-width="0.3"> = </tspan><tspan fill="#a0daf0" stroke="#a0daf0" stroke-width="0.3">listin1</tspan><tspan fill="#ececec" stroke="#ececec" stroke-width="0.3">;</tspan></text>
<text x="651" y="842.38" font-size="10.6" font-family='"Liberation Mono", monospace' text-anchor="end" fill="#d8d8d8">7</text>
<text x="651" y="856.06" font-size="10.6" font-family='"Liberation Mono", monospace' text-anchor="end" fill="#d8d8d8">8</text>
<text x="655" y="857.26" font-size="11.75" font-family='"Liberation Mono", monospace' style="white-space:pre" xml:space="preserve"><tspan fill="#e08ea8" stroke="#e08ea8" stroke-width="0.3">if </tspan><tspan fill="#ececec" stroke="#ececec" stroke-width="0.3">(</tspan><tspan fill="#a0daf0" stroke="#a0daf0" stroke-width="0.3">scl.length</tspan><tspan fill="#ececec" stroke="#ececec" stroke-width="0.3"> == </tspan><tspan fill="#b0f8e6" stroke="#b0f8e6" stroke-width="0.3">0</tspan><tspan fill="#ececec" stroke="#ececec" stroke-width="0.3">) {</tspan></text>
<text x="651" y="869.74" font-size="10.6" font-family='"Liberation Mono", monospace' text-anchor="end" fill="#d8d8d8">9</text>
<text x="655" y="870.94" font-size="11.75" font-family='"Liberation Mono", monospace' style="white-space:pre" xml:space="preserve"><tspan fill="#ececec" stroke="#ececec" stroke-width="0.3">  </tspan><tspan fill="#e08ea8" stroke="#e08ea8" stroke-width="0.3">return</tspan><tspan fill="#ececec" stroke="#ececec" stroke-width="0.3">;</tspan></text>
<text x="651" y="883.42" font-size="10.6" font-family='"Liberation Mono", monospace' text-anchor="end" fill="#d8d8d8">10</text>
<text x="655" y="884.62" font-size="11.75" font-family='"Liberation Mono", monospace' style="white-space:pre" xml:space="preserve"><tspan fill="#ececec" stroke="#ececec" stroke-width="0.3">}</tspan></text>
<text x="651" y="897.1" font-size="10.6" font-family='"Liberation Mono", monospace' text-anchor="end" fill="#d8d8d8">11</text>
<text x="651" y="910.78" font-size="10.6" font-family='"Liberation Mono", monospace' text-anchor="end" fill="#d8d8d8">12</text>
<text x="655" y="911.98" font-size="11.75" font-family='"Liberation Mono", monospace' style="white-space:pre" xml:space="preserve"><tspan fill="#92c883" stroke="#92c883" stroke-width="0.3">//build up kbm</tspan></text>
<text x="651" y="924.46" font-size="10.6" font-family='"Liberation Mono", monospace' text-anchor="end" fill="#d8d8d8">13</text>
<text x="655" y="925.66" font-size="11.75" font-family='"Liberation Mono", monospace' style="white-space:pre" xml:space="preserve"><tspan fill="#e08ea8" stroke="#e08ea8" stroke-width="0.3">let </tspan><tspan fill="#a0daf0" stroke="#a0daf0" stroke-width="0.3">scalelen</tspan><tspan fill="#ececec" stroke="#ececec" stroke-width="0.3"> = </tspan><tspan fill="#a0daf0" stroke="#a0daf0" stroke-width="0.3">scl</tspan><tspan fill="#ececec" stroke="#ececec" stroke-width="0.3">[</tspan><tspan fill="#b0f8e6" stroke="#b0f8e6" stroke-width="0.3">0</tspan><tspan fill="#ececec" stroke="#ececec" stroke-width="0.3">];</tspan></text>
<text x="651" y="938.14" font-size="10.6" font-family='"Liberation Mono", monospace' text-anchor="end" fill="#d8d8d8">14</text>
<text x="651" y="951.82" font-size="10.6" font-family='"Liberation Mono", monospace' text-anchor="end" fill="#d8d8d8">15</text>
<text x="655" y="953.02" font-size="11.75" font-family='"Liberation Mono", monospace' style="white-space:pre" xml:space="preserve"><tspan fill="#e08ea8" stroke="#e08ea8" stroke-width="0.3">if </tspan><tspan fill="#ececec" stroke="#ececec" stroke-width="0.3">(</tspan><tspan fill="#a0daf0" stroke="#a0daf0" stroke-width="0.3">fit</tspan><tspan fill="#ececec" stroke="#ececec" stroke-width="0.3"> &amp;&amp; </tspan><tspan fill="#a0daf0" stroke="#a0daf0" stroke-width="0.3">scalelen</tspan><tspan fill="#ececec" stroke="#ececec" stroke-width="0.3"> &lt; </tspan><tspan fill="#b0f8e6" stroke="#b0f8e6" stroke-width="0.3">32</tspan><tspan fill="#ececec" stroke="#ececec" stroke-width="0.3">) {</tspan></text>
<text x="651" y="965.5" font-size="10.6" font-family='"Liberation Mono", monospace' text-anchor="end" fill="#d8d8d8">16</text>
<text x="655" y="966.7" font-size="11.75" font-family='"Liberation Mono", monospace' style="white-space:pre" xml:space="preserve"><tspan fill="#ececec" stroke="#ececec" stroke-width="0.3">  </tspan><tspan fill="#e08ea8" stroke="#e08ea8" stroke-width="0.3">let </tspan><tspan fill="#a0daf0" stroke="#a0daf0" stroke-width="0.3">kbmoctave</tspan><tspan fill="#ececec" stroke="#ececec" stroke-width="0.3"> = </tspan><tspan fill="#a0daf0" stroke="#a0daf0" stroke-width="0.3">scalelen</tspan><tspan fill="#ececec" stroke="#ececec" stroke-width="0.3">;</tspan></text>
<text x="651" y="979.18" font-size="10.6" font-family='"Liberation Mono", monospace' text-anchor="end" fill="#d8d8d8">17</text>
<text x="655" y="980.38" font-size="11.75" font-family='"Liberation Mono", monospace' style="white-space:pre" xml:space="preserve"><tspan fill="#ececec" stroke="#ececec" stroke-width="0.3">  </tspan><tspan fill="#e08ea8" stroke="#e08ea8" stroke-width="0.3">let </tspan><tspan fill="#a0daf0" stroke="#a0daf0" stroke-width="0.3">kbmlen</tspan><tspan fill="#ececec" stroke="#ececec" stroke-width="0.3"> = </tspan><tspan fill="#f0c87a" stroke="#f0c87a" stroke-width="0.3">ceil</tspan><tspan fill="#ececec" stroke="#ececec" stroke-width="0.3">(</tspan><tspan fill="#a0daf0" stroke="#a0daf0" stroke-width="0.3">scalelen</tspan><tspan fill="#ececec" stroke="#ececec" stroke-width="0.3"> / </tspan><tspan fill="#b0f8e6" stroke="#b0f8e6" stroke-width="0.3">8</tspan><tspan fill="#ececec" stroke="#ececec" stroke-width="0.3">) * </tspan><tspan fill="#b0f8e6" stroke="#b0f8e6" stroke-width="0.3">8</tspan><tspan fill="#ececec" stroke="#ececec" stroke-width="0.3">;</tspan></text>
<text x="651" y="992.86" font-size="10.6" font-family='"Liberation Mono", monospace' text-anchor="end" fill="#d8d8d8">18</text>
<text x="651" y="1006.54" font-size="10.6" font-family='"Liberation Mono", monospace' text-anchor="end" fill="#d8d8d8">19</text>
<text x="655" y="1007.74" font-size="11.75" font-family='"Liberation Mono", monospace' style="white-space:pre" xml:space="preserve"><tspan fill="#ececec" stroke="#ececec" stroke-width="0.3">  </tspan><tspan fill="#92c883" stroke="#92c883" stroke-width="0.3">//build up a kbm, simply map notes in order, if kbmlen isn't a multiple of 8, there will be duplicated notes</tspan></text>
<text x="651" y="1020.22" font-size="10.6" font-family='"Liberation Mono", monospace' text-anchor="end" fill="#d8d8d8">20</text>
<text x="655" y="1021.42" font-size="11.75" font-family='"Liberation Mono", monospace' style="white-space:pre" xml:space="preserve"><tspan fill="#ececec" stroke="#ececec" stroke-width="0.3">  </tspan><tspan fill="#e08ea8" stroke="#e08ea8" stroke-width="0.3">let </tspan><tspan fill="#a0daf0" stroke="#a0daf0" stroke-width="0.3">kbm</tspan><tspan fill="#ececec" stroke="#ececec" stroke-width="0.3">: </tspan><tspan fill="#a0daf0" stroke="#a0daf0" stroke-width="0.3">list</tspan><tspan fill="#ececec" stroke="#ececec" stroke-width="0.3"> = </tspan><tspan fill="#ececec" stroke="#ececec" stroke-width="0.3">[</tspan><tspan fill="#a0daf0" stroke="#a0daf0" stroke-width="0.3">kbmlen</tspan><tspan fill="#ececec" stroke="#ececec" stroke-width="0.3">, </tspan><tspan fill="#b0f8e6" stroke="#b0f8e6" stroke-width="0.3">0</tspan><tspan fill="#ececec" stroke="#ececec" stroke-width="0.3">, </tspan><tspan fill="#b0f8e6" stroke="#b0f8e6" stroke-width="0.3">0</tspan><tspan fill="#ececec" stroke="#ececec" stroke-width="0.3">, </tspan><tspan fill="#a0daf0" stroke="#a0daf0" stroke-width="0.3">mid</tspan><tspan fill="#ececec" stroke="#ececec" stroke-width="0.3">, </tspan><tspan fill="#a0daf0" stroke="#a0daf0" stroke-width="0.3">ref</tspan><tspan fill="#ececec" stroke="#ececec" stroke-width="0.3">, </tspan><tspan fill="#a0daf0" stroke="#a0daf0" stroke-width="0.3">tuning</tspan><tspan fill="#ececec" stroke="#ececec" stroke-width="0.3">, </tspan><tspan fill="#a0daf0" stroke="#a0daf0" stroke-width="0.3">kbmoctave</tspan><tspan fill="#ececec" stroke="#ececec" stroke-width="0.3">];</tspan></text>
<rect x="577" y="565.3" width="20.6" height="3" fill="#8a8a8a"/>
<rect x="577" y="573.1" width="20.6" height="3" fill="#8a8a8a"/>
<rect x="577" y="580.9" width="20.6" height="3" fill="#8a8a8a"/>
<path d="M587.3,640 L597.5,645.3 L587.3,650.5 L577.1,645.3 Z" fill="#e6e6e6"/>
<path d="M577.1,649.3 L587.3,654.5 L597.5,649.3 L597.5,651.3 L587.3,656.5 L577.1,651.3 Z" fill="#e6e6e6"/>
<path d="M577.1,653.5 L587.3,658.7 L597.5,653.5 L597.5,655.5 L587.3,660.7 L577.1,655.5 Z" fill="#e6e6e6"/>
<path d="M594,748 L580.5,734.5 Q577.5,731 580.5,727.5 Q583.5,724.5 587,727.5 L597,737.5 Q599,740 597,742 Q595,744 592.5,742 L584,733.5" fill="none" stroke="#8a8a8a" stroke-width="1.8" transform="translate(0,-3)"/>
<rect x="578" y="873.5" width="19" height="17" fill="none" stroke="#8a8a8a" stroke-width="1.7"/>
<line x1="578" y1="877" x2="597" y2="877" stroke="#8a8a8a" stroke-width="1.4"/>
<line x1="578" y1="887" x2="597" y2="887" stroke="#8a8a8a" stroke-width="1.4"/>
<path d="M579,890.5 v4 M596,890.5 v4" stroke="#8a8a8a" stroke-width="1.5"/>
<circle cx="1576.5" cy="425" r="6.5" fill="none" stroke="#e6e6e6" stroke-width="2.6"/>
<line x1="1581.3" y1="430" x2="1589" y2="437.6" stroke="#e6e6e6" stroke-width="2.8" stroke-linecap="round"/>
<circle cx="1579.2" cy="487.7" r="10.3" fill="#e6e6e6"/>
<text x="1578.6" y="495.6" font-size="19.5" font-style="italic" font-weight="bold" font-family='"Liberation Serif", serif' text-anchor="middle" fill="#1f1f1f">i</text>
<rect x="1568.6" y="538.4" width="9.6" height="17.3" fill="#e6e6e6"/><rect x="1580" y="538.4" width="9.6" height="17.3" fill="#e6e6e6"/>
<rect x="1568.4" y="597" width="2.6" height="2.2" fill="#e6e6e6"/><rect x="1572.6" y="597" width="17.4" height="2.2" fill="#e6e6e6"/>
<rect x="1568.4" y="600.75" width="2.6" height="2.2" fill="#e6e6e6"/><rect x="1572.6" y="600.75" width="17.4" height="2.2" fill="#e6e6e6"/>
<rect x="1568.4" y="604.5" width="2.6" height="2.2" fill="#e6e6e6"/><rect x="1572.6" y="604.5" width="17.4" height="2.2" fill="#e6e6e6"/>
<rect x="1568.4" y="608.25" width="2.6" height="2.2" fill="#e6e6e6"/><rect x="1572.6" y="608.25" width="17.4" height="2.2" fill="#e6e6e6"/>
<rect x="1568.4" y="612" width="2.6" height="2.2" fill="#e6e6e6"/><rect x="1572.6" y="612" width="17.4" height="2.2" fill="#e6e6e6"/>
<rect x="1568.4" y="615.75" width="2.6" height="2.2" fill="#e6e6e6"/><rect x="1572.6" y="615.75" width="17.4" height="2.2" fill="#e6e6e6"/>
<path d="M1568.6,658.2 H1576 L1580.8,663 V666.5 H1577 V670.5 H1580.8 V676.8 H1568.6 Z" fill="#e6e6e6"/>
<path d="M1577.5,666.5 H1584.5 V663.5 L1590,668.5 L1584.5,673.5 V670.5 H1577.5 Z" fill="#e6e6e6"/>
<path d="M1579.3,737 C1572,737 1568.8,740.5 1568.8,744.5 C1568.8,747.5 1570.5,749.6 1573,750.6 L1570.5,757.5 L1576.6,751.9 C1577.5,752 1578.4,752.1 1579.3,752.1 C1586.6,752.1 1589.8,748.5 1589.8,744.5 C1589.8,740.5 1586.6,737 1579.3,737 Z" fill="#7a7a7a"/>
<circle cx="1579.3" cy="902.5" r="10.2" fill="#e2e2e2"/><circle cx="1579.3" cy="902.5" r="2.4" fill="#1f1f1f"/>
<text x="1579" y="946" font-size="14" font-family='"Liberation Sans", sans-serif' text-anchor="middle" fill="#8a8a8a">1%</text>
<rect x="1567.4" y="958.2" width="9.2" height="31" fill="#8a8a8a"/><rect x="1581.6" y="958.2" width="9.4" height="31" fill="#8a8a8a"/>
<rect x="1567.4" y="990.5" width="9.2" height="3.1" fill="#8a8a8a"/><rect x="1581.6" y="990.5" width="9.4" height="3.1" fill="#8a8a8a"/>
<rect x="1567.4" y="995.7" width="9.2" height="3.1" fill="#8a8a8a"/><rect x="1581.6" y="995.7" width="9.4" height="3.1" fill="#8a8a8a"/>
<rect x="1567.4" y="1000.9" width="9.2" height="3.1" fill="#8a8a8a"/><rect x="1581.6" y="1000.9" width="9.4" height="3.1" fill="#8a8a8a"/>
<rect x="1567.4" y="1006.1" width="9.2" height="3.1" fill="#8a8a8a"/><rect x="1581.6" y="1006.1" width="9.4" height="3.1" fill="#8a8a8a"/>
<rect x="1567.4" y="1011.3" width="9.2" height="3.1" fill="#8a8a8a"/><rect x="1581.6" y="1011.3" width="9.4" height="3.1" fill="#8a8a8a"/>
<rect x="1567.4" y="1016.5" width="9.2" height="3.1" fill="#8a8a8a"/><rect x="1581.6" y="1016.5" width="9.4" height="3.1" fill="#8a8a8a"/>
<rect x="1567.4" y="1021.7" width="9.2" height="3.1" fill="#8a8a8a"/><rect x="1581.6" y="1021.7" width="9.4" height="3.1" fill="#8a8a8a"/>
<rect x="1567.4" y="1026.9" width="9.2" height="3.1" fill="#8a8a8a"/><rect x="1581.6" y="1026.9" width="9.4" height="3.1" fill="#8a8a8a"/>
<rect x="1567.4" y="1032.1" width="9.2" height="3.1" fill="#8a8a8a"/><rect x="1581.6" y="1032.1" width="9.4" height="3.1" fill="#8a8a8a"/>
<rect x="1567.4" y="1037.3" width="9.2" height="3.1" fill="#8a8a8a"/><rect x="1581.6" y="1037.3" width="9.4" height="3.1" fill="#8a8a8a"/>
<rect x="1567.4" y="1042.5" width="9.2" height="3.1" fill="#8a8a8a"/><rect x="1581.6" y="1042.5" width="9.4" height="3.1" fill="#8a8a8a"/>
<rect x="1567.4" y="1047.7" width="9.2" height="3.1" fill="#8a8a8a"/><rect x="1581.6" y="1047.7" width="9.4" height="3.1" fill="#8a8a8a"/>
<rect x="1567.4" y="1052.9" width="9.2" height="3.1" fill="#8a8a8a"/><rect x="1581.6" y="1052.9" width="9.4" height="3.1" fill="#8a8a8a"/>
<rect x="1567.4" y="1058.1" width="9.2" height="3.1" fill="#8a8a8a"/><rect x="1581.6" y="1058.1" width="9.4" height="3.1" fill="#8a8a8a"/>
<rect x="1567.4" y="1063.3" width="9.2" height="3.1" fill="#8a8a8a"/><rect x="1581.6" y="1063.3" width="9.4" height="3.1" fill="#8a8a8a"/>
<rect x="1567.4" y="1068.5" width="9.2" height="3.1" fill="#8a8a8a"/><rect x="1581.6" y="1068.5" width="9.4" height="3.1" fill="#8a8a8a"/>
<rect x="1567.4" y="1073.7" width="9.2" height="3.1" fill="#8a8a8a"/><rect x="1581.6" y="1073.7" width="9.4" height="3.1" fill="#8a8a8a"/>
<rect x="1567.4" y="1078.9" width="9.2" height="3.1" fill="#8a8a8a"/><rect x="1581.6" y="1078.9" width="9.4" height="3.1" fill="#8a8a8a"/>
<rect x="1567.4" y="1084.1" width="9.2" height="3.1" fill="#8a8a8a"/><rect x="1581.6" y="1084.1" width="9.4" height="3.1" fill="#8a8a8a"/>
<rect x="1567.4" y="1089.3" width="9.2" height="3.1" fill="#8a8a8a"/><rect x="1581.6" y="1089.3" width="9.4" height="3.1" fill="#8a8a8a"/>
<rect x="1567.4" y="1094.5" width="9.2" height="3.1" fill="#8a8a8a"/><rect x="1581.6" y="1094.5" width="9.4" height="3.1" fill="#8a8a8a"/>
<circle cx="1579.3" cy="993.5" r="6.7" fill="#e2e2e2"/>
<path d="M582,1122.5 V1118.5 Q582,1113.5 587.5,1113.5 Q593,1113.5 593,1118.5 V1122.5" fill="none" stroke="#e6e6e6" stroke-width="2.6"/>
<rect x="579" y="1121.8" width="17" height="12.2" rx="1.5" fill="#e6e6e6"/>
<circle cx="587.5" cy="1126.5" r="1.8" fill="#1f1f1f"/><rect x="586.7" y="1126.5" width="1.6" height="4.2" fill="#1f1f1f"/>
<path d="M628,1132.8 H619.2 V1114.2 H637.6 V1123" fill="none" stroke="#7a7a7a" stroke-width="2.6"/>
<path d="M628.3,1119.5 L637.5,1126.5 L633.8,1127.3 L637.5,1132.3 L635.8,1133.5 L632.2,1128.5 L629.8,1131.5 Z" fill="#7a7a7a"/>
<rect x="678" y="1113" width="14" height="14" fill="#7a7a7a"/>
<path d="M695.8,1113 V1131 H678" fill="none" stroke="#7a7a7a" stroke-width="3.4"/>
<rect x="760" y="1114.6" width="14" height="11" fill="#e6e6e6"/>
<rect x="765.2" y="1119.3" width="17.3" height="14" fill="#1f1f1f"/>
<rect x="766.7" y="1120.8" width="14.3" height="11" fill="#e6e6e6"/>
<path d="M820,1118 H827 L834,1128.4 H820 Z M830,1118 H841 V1128.4 H836.5 Z" fill="#7a7a7a"/>
<line x1="825.8" y1="1113" x2="834.8" y2="1133" stroke="#7a7a7a" stroke-width="1.6"/>
<g stroke="#7a7a7a" stroke-width="1.6">
<line x1="861.6" y1="1113" x2="861.6" y2="1134"/>
<line x1="868" y1="1113" x2="868" y2="1134"/>
<line x1="874.6" y1="1113" x2="874.6" y2="1134"/>
<line x1="857.5" y1="1117.1" x2="878.4" y2="1117.1"/>
<line x1="857.5" y1="1123.3" x2="878.4" y2="1123.3"/>
<line x1="857.5" y1="1129.8" x2="878.4" y2="1129.8"/>
</g>
<rect x="924.9" y="1115.7" width="6.2" height="4.4" fill="#e6e6e6"/>
<rect x="917.3" y="1126.7" width="6.2" height="4.4" fill="#e6e6e6"/>
<rect x="924.9" y="1126.7" width="6.2" height="4.4" fill="#e6e6e6"/>
<rect x="932.1" y="1126.7" width="6.2" height="4.4" fill="#e6e6e6"/>
<path d="M928,1120 L920.4,1126.7 M928,1120 V1126.7 M928,1120 L935.2,1126.7" stroke="#e6e6e6" stroke-width="1.1"/>
<path d="M958.5,1119 A7.6,7.6 0 0 1 972.5,1120.5 M972.3,1127 A7.6,7.6 0 0 1 958.4,1125.5" fill="none" stroke="#e6e6e6" stroke-width="2.8"/>
<path d="M969,1120 L975,1117 L974.5,1123.5 Z M962,1126 L956,1129 L956.5,1122.5 Z" fill="#e6e6e6"/>
<line x1="995.2" y1="1133.2" x2="1003.5" y2="1120.5" stroke="#7a7a7a" stroke-width="1.8" stroke-linecap="round"/>
<path d="M998.8,1117.8 L1003,1113 L1012.2,1119.5 L1008,1124.3 Z" fill="#7a7a7a"/>
<path d="M1170,1130 L1161,1121 Q1158.5,1118.5 1161,1116 Q1163.5,1113.5 1166,1116 L1173.5,1123.5 Q1175,1125 1173.5,1126.5 Q1172,1128 1170.5,1126.5 L1164,1120" fill="none" stroke="#7a7a7a" stroke-width="1.7"/>
<path d="M1173.5,1109.5 V1117 M1169.75,1113.25 H1177.25" stroke="#7a7a7a" stroke-width="1.6"/>
<circle cx="1512.2" cy="1123.2" r="12.1" fill="none" stroke="#8a8a8a" stroke-width="5.2" stroke-dasharray="17.5 1.5" stroke-dashoffset="-0.75"/>
<path d="M1509,1118.5 L1517.8,1123.3 L1509,1128.2 Z" fill="#eeeeee"/>
<path d="M1573.6,1119.3 A7.9,7.9 0 1 0 1584.8,1119.3" fill="none" stroke="#e6e6e6" stroke-width="3.2" stroke-linecap="round"/>
<line x1="1579.2" y1="1114.2" x2="1579.2" y2="1124.6" stroke="#e6e6e6" stroke-width="3.2" stroke-linecap="round"/>
<rect x="565.7" y="281.7" width="1034.6" height="862.8" rx="9.8" fill="none" stroke="#5c5c5c" stroke-width="1.2"/>
</svg></div>
</div></body></html>
